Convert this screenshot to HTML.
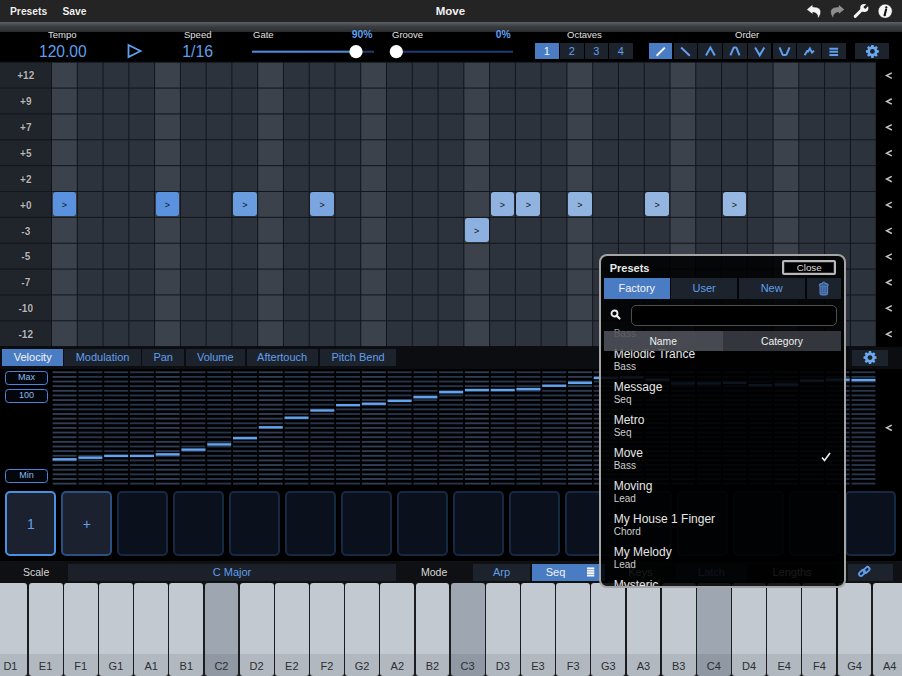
<!DOCTYPE html>
<html><head><meta charset="utf-8"><style>
html,body{margin:0;padding:0;width:902px;height:676px;overflow:hidden;background:#000;font-family:"Liberation Sans", sans-serif}
.t{position:absolute;white-space:nowrap;font-family:"Liberation Sans", sans-serif}
.b{font-weight:bold}
</style></head><body>
<div style="position:absolute;left:0;top:0;width:902px;height:22px;background:#242424"></div>
<div style="position:absolute;left:0;top:22px;width:902px;height:10.5px;background:linear-gradient(#5d6267,#3b3e42 40%,#2c2e31 85%,#1a1b1d)"></div>
<div class="t b" style="left:10px;top:6px;font-size:10.3px;color:#f2f2f2;text-shadow:0 0 1px #000">Presets</div>
<div class="t b" style="left:62.5px;top:6px;font-size:10.3px;color:#f2f2f2;text-shadow:0 0 1px #000">Save</div>
<div class="t b" style="left:-0.6px;width:902px;text-align:center;top:4.7px;font-size:11.5px;color:#f2f2f2">Move</div>
<svg style="position:absolute;left:0;top:0" width="902" height="22">
 <path d="M806.6 9.4 L812.8 4.2 L812.8 6.8 Q822.2 6.8 820.6 14 Q819.8 16.9 817.4 18.3 Q818.4 14.8 815.8 13.2 Q814.5 12.5 812.8 12.4 L812.8 14.6 Z" fill="#f4f4f4" stroke="#111" stroke-width="0.6"/>
 <g transform="translate(1651.3 0) scale(-1 1)"><path d="M806.6 9.4 L812.8 4.2 L812.8 6.8 Q822.2 6.8 820.6 14 Q819.8 16.9 817.4 18.3 Q818.4 14.8 815.8 13.2 Q814.5 12.5 812.8 12.4 L812.8 14.6 Z" fill="#8e8e8e" stroke="#111" stroke-width="0.6"/></g>
 <path d="M855.2 16.4 L861.6 10" stroke="#f4f4f4" stroke-width="3" stroke-linecap="round"/>
 <circle cx="864.3" cy="8" r="4.1" fill="#f4f4f4"/>
 <path d="M864.3 8 L868.5 3.8" stroke="#242424" stroke-width="2.6" stroke-linecap="butt"/>
 <circle cx="865.2" cy="7.1" r="1.2" fill="#242424"/>
 <circle cx="885.2" cy="11.2" r="7.1" fill="#f6f6f6" stroke="#111" stroke-width="0.6"/>
 <circle cx="886.3" cy="7.4" r="1.15" fill="#111"/>
 <path d="M886.1 9.6 L884.6 15.2" stroke="#111" stroke-width="2.1" stroke-linecap="round"/>
 <path d="M883.8 15.4 H885.6" stroke="#111" stroke-width="1"/>
</svg>
<div style="position:absolute;left:0;top:32px;width:902px;height:30px;background:#000"></div>
<div class="t" style="left:48px;top:29px;font-size:9.5px;color:#e0e0e0">Tempo</div>
<div class="t" style="left:39px;top:42.8px;font-size:15.6px;color:#5f9fec">120.00</div>
<svg style="position:absolute;left:125px;top:42px" width="20" height="18"><path d="M3.5 3 L15.5 9 L3.5 15 Z" fill="none" stroke="#5f9fec" stroke-width="1.8" stroke-linejoin="miter"/></svg>
<div class="t" style="left:184px;top:29px;font-size:9.5px;color:#e0e0e0">Speed</div>
<div class="t" style="left:182.3px;top:42.8px;font-size:15.8px;color:#5f9fec">1/16</div>
<div class="t" style="left:253px;top:29px;font-size:9.5px;color:#e0e0e0">Gate</div>
<div class="t b" style="left:351.8px;top:29px;font-size:10.3px;color:#5f9fec">90%</div>
<div class="t" style="left:392px;top:29px;font-size:9.5px;color:#e0e0e0">Groove</div>
<div class="t b" style="left:495.8px;top:29px;font-size:10.3px;color:#5f9fec">0%</div>
<svg style="position:absolute;left:0;top:40px" width="902" height="22">
 <rect x="252" y="10.7" width="104" height="2" fill="#4d8ee0"/>
 <rect x="356" y="10.7" width="18" height="2" fill="#1f3c6e"/>
 <circle cx="356" cy="11.7" r="6.6" fill="#fff"/>
 <rect x="396" y="10.7" width="117" height="2" fill="#1f3c78"/>
 <circle cx="396.3" cy="11.7" r="6.6" fill="#fff"/>
</svg>
<div class="t" style="left:567px;top:29px;font-size:9.5px;color:#e0e0e0">Octaves</div>
<div class="t" style="left:735px;top:29px;font-size:9.5px;color:#e0e0e0">Order</div>
<div class="t" style="left:535px;top:43.3px;width:23.8px;height:16.2px;line-height:16.2px;text-align:center;font-size:11px;background:#4a7cc4;color:#f4f4f4">1</div><div class="t" style="left:560px;top:43.3px;width:23.8px;height:16.2px;line-height:16.2px;text-align:center;font-size:11px;background:#1d232d;color:#5f9fec">2</div><div class="t" style="left:584.5px;top:43.3px;width:23.8px;height:16.2px;line-height:16.2px;text-align:center;font-size:11px;background:#1d232d;color:#5f9fec">3</div><div class="t" style="left:609px;top:43.3px;width:23.8px;height:16.2px;line-height:16.2px;text-align:center;font-size:11px;background:#1d232d;color:#5f9fec">4</div><div style="position:absolute;left:648.8px;top:43.3px;width:23.7px;height:16.2px;background:#4a7cc4"></div><div style="position:absolute;left:673.54px;top:43.3px;width:23.7px;height:16.2px;background:#1d232d"></div><div style="position:absolute;left:698.28px;top:43.3px;width:23.7px;height:16.2px;background:#1d232d"></div><div style="position:absolute;left:723.02px;top:43.3px;width:23.7px;height:16.2px;background:#1d232d"></div><div style="position:absolute;left:747.76px;top:43.3px;width:23.7px;height:16.2px;background:#1d232d"></div><div style="position:absolute;left:772.5px;top:43.3px;width:23.7px;height:16.2px;background:#1d232d"></div><div style="position:absolute;left:797.24px;top:43.3px;width:23.7px;height:16.2px;background:#1d232d"></div><div style="position:absolute;left:821.9799999999999px;top:43.3px;width:23.7px;height:16.2px;background:#1d232d"></div><svg style="position:absolute;left:0;top:0" width="902" height="62">
 <g fill="none" stroke="#5f9fec" stroke-width="2" stroke-linecap="butt" stroke-linejoin="miter">
  <path d="M656.6 55.7 L664.8 47.6" stroke="#f4f4f4"/>
  <path d="M681.1 47.6 L689.8 55.7"/>
  <path d="M706 55.4 L710.4 47.5 L714.8 55.4"/>
  <path d="M730.4 55.3 L733.4 48.2 Q733.8 47.4 734.6 47.4 L735.4 47.4 Q736.2 47.4 736.6 48.2 L739.5 55.3"/>
  <path d="M755.1 47.4 L759.7 55.3 L764.3 47.4"/>
  <path d="M779.5 47.4 L782.4 54.2 Q782.8 55 783.6 55 L785.4 55 Q786.2 55 786.6 54.2 L789.6 47.4"/>
  <path d="M804.6 55.2 L807 51.2 L808 51.6 L809.9 48.6 L812 52.6 L814 50.6"/>
  <path d="M829.4 48.7 H838.1 M829.4 51.8 H838.1 M829.4 54.9 H838.1"/>
 </g>
</svg>
<div style="position:absolute;left:854.7px;top:43.2px;width:34.2px;height:16.2px;background:#1d232d"></div><svg style="position:absolute;left:0;top:0" width="902" height="62"><path d="M877.19 49.92 L878.90 50.28 L878.90 52.52 L877.19 52.88 L876.84 53.74 L877.79 55.21 L876.21 56.79 L874.74 55.84 L873.88 56.19 L873.52 57.90 L871.28 57.90 L870.92 56.19 L870.06 55.84 L868.59 56.79 L867.01 55.21 L867.96 53.74 L867.61 52.88 L865.90 52.52 L865.90 50.28 L867.61 49.92 L867.96 49.06 L867.01 47.59 L868.59 46.01 L870.06 46.96 L870.92 46.61 L871.28 44.90 L873.52 44.90 L873.88 46.61 L874.74 46.96 L876.21 46.01 L877.79 47.59 L876.84 49.06Z" fill="#6aa8f0"/><circle cx="872.4" cy="51.4" r="2.4" fill="#1d232d"/></svg><svg style="position:absolute;left:0;top:0" width="902" height="360"><rect x="0" y="61.7" width="876" height="284.76" fill="#121519"/><rect x="0" y="62.70" width="51" height="24.86" fill="#20242b"/><rect x="52.00" y="62.70" width="24.77" height="24.86" fill="#3b424c"/><rect x="77.77" y="62.70" width="24.77" height="24.86" fill="#2d333d"/><rect x="103.54" y="62.70" width="24.77" height="24.86" fill="#2d333d"/><rect x="129.31" y="62.70" width="24.77" height="24.86" fill="#2d333d"/><rect x="155.08" y="62.70" width="24.77" height="24.86" fill="#3b424c"/><rect x="180.85" y="62.70" width="24.77" height="24.86" fill="#2d333d"/><rect x="206.62" y="62.70" width="24.77" height="24.86" fill="#2d333d"/><rect x="232.39" y="62.70" width="24.77" height="24.86" fill="#2d333d"/><rect x="258.16" y="62.70" width="24.77" height="24.86" fill="#3b424c"/><rect x="283.93" y="62.70" width="24.77" height="24.86" fill="#2d333d"/><rect x="309.70" y="62.70" width="24.77" height="24.86" fill="#2d333d"/><rect x="335.47" y="62.70" width="24.77" height="24.86" fill="#2d333d"/><rect x="361.24" y="62.70" width="24.77" height="24.86" fill="#3b424c"/><rect x="387.01" y="62.70" width="24.77" height="24.86" fill="#2d333d"/><rect x="412.78" y="62.70" width="24.77" height="24.86" fill="#2d333d"/><rect x="438.55" y="62.70" width="24.77" height="24.86" fill="#2d333d"/><rect x="464.32" y="62.70" width="24.77" height="24.86" fill="#3b424c"/><rect x="490.09" y="62.70" width="24.77" height="24.86" fill="#2d333d"/><rect x="515.86" y="62.70" width="24.77" height="24.86" fill="#2d333d"/><rect x="541.63" y="62.70" width="24.77" height="24.86" fill="#2d333d"/><rect x="567.40" y="62.70" width="24.77" height="24.86" fill="#3b424c"/><rect x="593.17" y="62.70" width="24.77" height="24.86" fill="#2d333d"/><rect x="618.94" y="62.70" width="24.77" height="24.86" fill="#2d333d"/><rect x="644.71" y="62.70" width="24.77" height="24.86" fill="#2d333d"/><rect x="670.48" y="62.70" width="24.77" height="24.86" fill="#3b424c"/><rect x="696.25" y="62.70" width="24.77" height="24.86" fill="#2d333d"/><rect x="722.02" y="62.70" width="24.77" height="24.86" fill="#2d333d"/><rect x="747.79" y="62.70" width="24.77" height="24.86" fill="#2d333d"/><rect x="773.56" y="62.70" width="24.77" height="24.86" fill="#3b424c"/><rect x="799.33" y="62.70" width="24.77" height="24.86" fill="#2d333d"/><rect x="825.10" y="62.70" width="24.77" height="24.86" fill="#2d333d"/><rect x="850.87" y="62.70" width="24.77" height="24.86" fill="#2d333d"/><rect x="0" y="88.56" width="51" height="24.86" fill="#20242b"/><rect x="52.00" y="88.56" width="24.77" height="24.86" fill="#3b424c"/><rect x="77.77" y="88.56" width="24.77" height="24.86" fill="#2d333d"/><rect x="103.54" y="88.56" width="24.77" height="24.86" fill="#2d333d"/><rect x="129.31" y="88.56" width="24.77" height="24.86" fill="#2d333d"/><rect x="155.08" y="88.56" width="24.77" height="24.86" fill="#3b424c"/><rect x="180.85" y="88.56" width="24.77" height="24.86" fill="#2d333d"/><rect x="206.62" y="88.56" width="24.77" height="24.86" fill="#2d333d"/><rect x="232.39" y="88.56" width="24.77" height="24.86" fill="#2d333d"/><rect x="258.16" y="88.56" width="24.77" height="24.86" fill="#3b424c"/><rect x="283.93" y="88.56" width="24.77" height="24.86" fill="#2d333d"/><rect x="309.70" y="88.56" width="24.77" height="24.86" fill="#2d333d"/><rect x="335.47" y="88.56" width="24.77" height="24.86" fill="#2d333d"/><rect x="361.24" y="88.56" width="24.77" height="24.86" fill="#3b424c"/><rect x="387.01" y="88.56" width="24.77" height="24.86" fill="#2d333d"/><rect x="412.78" y="88.56" width="24.77" height="24.86" fill="#2d333d"/><rect x="438.55" y="88.56" width="24.77" height="24.86" fill="#2d333d"/><rect x="464.32" y="88.56" width="24.77" height="24.86" fill="#3b424c"/><rect x="490.09" y="88.56" width="24.77" height="24.86" fill="#2d333d"/><rect x="515.86" y="88.56" width="24.77" height="24.86" fill="#2d333d"/><rect x="541.63" y="88.56" width="24.77" height="24.86" fill="#2d333d"/><rect x="567.40" y="88.56" width="24.77" height="24.86" fill="#3b424c"/><rect x="593.17" y="88.56" width="24.77" height="24.86" fill="#2d333d"/><rect x="618.94" y="88.56" width="24.77" height="24.86" fill="#2d333d"/><rect x="644.71" y="88.56" width="24.77" height="24.86" fill="#2d333d"/><rect x="670.48" y="88.56" width="24.77" height="24.86" fill="#3b424c"/><rect x="696.25" y="88.56" width="24.77" height="24.86" fill="#2d333d"/><rect x="722.02" y="88.56" width="24.77" height="24.86" fill="#2d333d"/><rect x="747.79" y="88.56" width="24.77" height="24.86" fill="#2d333d"/><rect x="773.56" y="88.56" width="24.77" height="24.86" fill="#3b424c"/><rect x="799.33" y="88.56" width="24.77" height="24.86" fill="#2d333d"/><rect x="825.10" y="88.56" width="24.77" height="24.86" fill="#2d333d"/><rect x="850.87" y="88.56" width="24.77" height="24.86" fill="#2d333d"/><rect x="0" y="114.42" width="51" height="24.86" fill="#20242b"/><rect x="52.00" y="114.42" width="24.77" height="24.86" fill="#3b424c"/><rect x="77.77" y="114.42" width="24.77" height="24.86" fill="#2d333d"/><rect x="103.54" y="114.42" width="24.77" height="24.86" fill="#2d333d"/><rect x="129.31" y="114.42" width="24.77" height="24.86" fill="#2d333d"/><rect x="155.08" y="114.42" width="24.77" height="24.86" fill="#3b424c"/><rect x="180.85" y="114.42" width="24.77" height="24.86" fill="#2d333d"/><rect x="206.62" y="114.42" width="24.77" height="24.86" fill="#2d333d"/><rect x="232.39" y="114.42" width="24.77" height="24.86" fill="#2d333d"/><rect x="258.16" y="114.42" width="24.77" height="24.86" fill="#3b424c"/><rect x="283.93" y="114.42" width="24.77" height="24.86" fill="#2d333d"/><rect x="309.70" y="114.42" width="24.77" height="24.86" fill="#2d333d"/><rect x="335.47" y="114.42" width="24.77" height="24.86" fill="#2d333d"/><rect x="361.24" y="114.42" width="24.77" height="24.86" fill="#3b424c"/><rect x="387.01" y="114.42" width="24.77" height="24.86" fill="#2d333d"/><rect x="412.78" y="114.42" width="24.77" height="24.86" fill="#2d333d"/><rect x="438.55" y="114.42" width="24.77" height="24.86" fill="#2d333d"/><rect x="464.32" y="114.42" width="24.77" height="24.86" fill="#3b424c"/><rect x="490.09" y="114.42" width="24.77" height="24.86" fill="#2d333d"/><rect x="515.86" y="114.42" width="24.77" height="24.86" fill="#2d333d"/><rect x="541.63" y="114.42" width="24.77" height="24.86" fill="#2d333d"/><rect x="567.40" y="114.42" width="24.77" height="24.86" fill="#3b424c"/><rect x="593.17" y="114.42" width="24.77" height="24.86" fill="#2d333d"/><rect x="618.94" y="114.42" width="24.77" height="24.86" fill="#2d333d"/><rect x="644.71" y="114.42" width="24.77" height="24.86" fill="#2d333d"/><rect x="670.48" y="114.42" width="24.77" height="24.86" fill="#3b424c"/><rect x="696.25" y="114.42" width="24.77" height="24.86" fill="#2d333d"/><rect x="722.02" y="114.42" width="24.77" height="24.86" fill="#2d333d"/><rect x="747.79" y="114.42" width="24.77" height="24.86" fill="#2d333d"/><rect x="773.56" y="114.42" width="24.77" height="24.86" fill="#3b424c"/><rect x="799.33" y="114.42" width="24.77" height="24.86" fill="#2d333d"/><rect x="825.10" y="114.42" width="24.77" height="24.86" fill="#2d333d"/><rect x="850.87" y="114.42" width="24.77" height="24.86" fill="#2d333d"/><rect x="0" y="140.28" width="51" height="24.86" fill="#20242b"/><rect x="52.00" y="140.28" width="24.77" height="24.86" fill="#3b424c"/><rect x="77.77" y="140.28" width="24.77" height="24.86" fill="#2d333d"/><rect x="103.54" y="140.28" width="24.77" height="24.86" fill="#2d333d"/><rect x="129.31" y="140.28" width="24.77" height="24.86" fill="#2d333d"/><rect x="155.08" y="140.28" width="24.77" height="24.86" fill="#3b424c"/><rect x="180.85" y="140.28" width="24.77" height="24.86" fill="#2d333d"/><rect x="206.62" y="140.28" width="24.77" height="24.86" fill="#2d333d"/><rect x="232.39" y="140.28" width="24.77" height="24.86" fill="#2d333d"/><rect x="258.16" y="140.28" width="24.77" height="24.86" fill="#3b424c"/><rect x="283.93" y="140.28" width="24.77" height="24.86" fill="#2d333d"/><rect x="309.70" y="140.28" width="24.77" height="24.86" fill="#2d333d"/><rect x="335.47" y="140.28" width="24.77" height="24.86" fill="#2d333d"/><rect x="361.24" y="140.28" width="24.77" height="24.86" fill="#3b424c"/><rect x="387.01" y="140.28" width="24.77" height="24.86" fill="#2d333d"/><rect x="412.78" y="140.28" width="24.77" height="24.86" fill="#2d333d"/><rect x="438.55" y="140.28" width="24.77" height="24.86" fill="#2d333d"/><rect x="464.32" y="140.28" width="24.77" height="24.86" fill="#3b424c"/><rect x="490.09" y="140.28" width="24.77" height="24.86" fill="#2d333d"/><rect x="515.86" y="140.28" width="24.77" height="24.86" fill="#2d333d"/><rect x="541.63" y="140.28" width="24.77" height="24.86" fill="#2d333d"/><rect x="567.40" y="140.28" width="24.77" height="24.86" fill="#3b424c"/><rect x="593.17" y="140.28" width="24.77" height="24.86" fill="#2d333d"/><rect x="618.94" y="140.28" width="24.77" height="24.86" fill="#2d333d"/><rect x="644.71" y="140.28" width="24.77" height="24.86" fill="#2d333d"/><rect x="670.48" y="140.28" width="24.77" height="24.86" fill="#3b424c"/><rect x="696.25" y="140.28" width="24.77" height="24.86" fill="#2d333d"/><rect x="722.02" y="140.28" width="24.77" height="24.86" fill="#2d333d"/><rect x="747.79" y="140.28" width="24.77" height="24.86" fill="#2d333d"/><rect x="773.56" y="140.28" width="24.77" height="24.86" fill="#3b424c"/><rect x="799.33" y="140.28" width="24.77" height="24.86" fill="#2d333d"/><rect x="825.10" y="140.28" width="24.77" height="24.86" fill="#2d333d"/><rect x="850.87" y="140.28" width="24.77" height="24.86" fill="#2d333d"/><rect x="0" y="166.14" width="51" height="24.86" fill="#20242b"/><rect x="52.00" y="166.14" width="24.77" height="24.86" fill="#3b424c"/><rect x="77.77" y="166.14" width="24.77" height="24.86" fill="#2d333d"/><rect x="103.54" y="166.14" width="24.77" height="24.86" fill="#2d333d"/><rect x="129.31" y="166.14" width="24.77" height="24.86" fill="#2d333d"/><rect x="155.08" y="166.14" width="24.77" height="24.86" fill="#3b424c"/><rect x="180.85" y="166.14" width="24.77" height="24.86" fill="#2d333d"/><rect x="206.62" y="166.14" width="24.77" height="24.86" fill="#2d333d"/><rect x="232.39" y="166.14" width="24.77" height="24.86" fill="#2d333d"/><rect x="258.16" y="166.14" width="24.77" height="24.86" fill="#3b424c"/><rect x="283.93" y="166.14" width="24.77" height="24.86" fill="#2d333d"/><rect x="309.70" y="166.14" width="24.77" height="24.86" fill="#2d333d"/><rect x="335.47" y="166.14" width="24.77" height="24.86" fill="#2d333d"/><rect x="361.24" y="166.14" width="24.77" height="24.86" fill="#3b424c"/><rect x="387.01" y="166.14" width="24.77" height="24.86" fill="#2d333d"/><rect x="412.78" y="166.14" width="24.77" height="24.86" fill="#2d333d"/><rect x="438.55" y="166.14" width="24.77" height="24.86" fill="#2d333d"/><rect x="464.32" y="166.14" width="24.77" height="24.86" fill="#3b424c"/><rect x="490.09" y="166.14" width="24.77" height="24.86" fill="#2d333d"/><rect x="515.86" y="166.14" width="24.77" height="24.86" fill="#2d333d"/><rect x="541.63" y="166.14" width="24.77" height="24.86" fill="#2d333d"/><rect x="567.40" y="166.14" width="24.77" height="24.86" fill="#3b424c"/><rect x="593.17" y="166.14" width="24.77" height="24.86" fill="#2d333d"/><rect x="618.94" y="166.14" width="24.77" height="24.86" fill="#2d333d"/><rect x="644.71" y="166.14" width="24.77" height="24.86" fill="#2d333d"/><rect x="670.48" y="166.14" width="24.77" height="24.86" fill="#3b424c"/><rect x="696.25" y="166.14" width="24.77" height="24.86" fill="#2d333d"/><rect x="722.02" y="166.14" width="24.77" height="24.86" fill="#2d333d"/><rect x="747.79" y="166.14" width="24.77" height="24.86" fill="#2d333d"/><rect x="773.56" y="166.14" width="24.77" height="24.86" fill="#3b424c"/><rect x="799.33" y="166.14" width="24.77" height="24.86" fill="#2d333d"/><rect x="825.10" y="166.14" width="24.77" height="24.86" fill="#2d333d"/><rect x="850.87" y="166.14" width="24.77" height="24.86" fill="#2d333d"/><rect x="0" y="192.00" width="51" height="24.86" fill="#20242b"/><rect x="52.00" y="192.00" width="24.77" height="24.86" fill="#3b424c"/><rect x="77.77" y="192.00" width="24.77" height="24.86" fill="#2d333d"/><rect x="103.54" y="192.00" width="24.77" height="24.86" fill="#2d333d"/><rect x="129.31" y="192.00" width="24.77" height="24.86" fill="#2d333d"/><rect x="155.08" y="192.00" width="24.77" height="24.86" fill="#3b424c"/><rect x="180.85" y="192.00" width="24.77" height="24.86" fill="#2d333d"/><rect x="206.62" y="192.00" width="24.77" height="24.86" fill="#2d333d"/><rect x="232.39" y="192.00" width="24.77" height="24.86" fill="#2d333d"/><rect x="258.16" y="192.00" width="24.77" height="24.86" fill="#3b424c"/><rect x="283.93" y="192.00" width="24.77" height="24.86" fill="#2d333d"/><rect x="309.70" y="192.00" width="24.77" height="24.86" fill="#2d333d"/><rect x="335.47" y="192.00" width="24.77" height="24.86" fill="#2d333d"/><rect x="361.24" y="192.00" width="24.77" height="24.86" fill="#3b424c"/><rect x="387.01" y="192.00" width="24.77" height="24.86" fill="#2d333d"/><rect x="412.78" y="192.00" width="24.77" height="24.86" fill="#2d333d"/><rect x="438.55" y="192.00" width="24.77" height="24.86" fill="#2d333d"/><rect x="464.32" y="192.00" width="24.77" height="24.86" fill="#3b424c"/><rect x="490.09" y="192.00" width="24.77" height="24.86" fill="#2d333d"/><rect x="515.86" y="192.00" width="24.77" height="24.86" fill="#2d333d"/><rect x="541.63" y="192.00" width="24.77" height="24.86" fill="#2d333d"/><rect x="567.40" y="192.00" width="24.77" height="24.86" fill="#3b424c"/><rect x="593.17" y="192.00" width="24.77" height="24.86" fill="#2d333d"/><rect x="618.94" y="192.00" width="24.77" height="24.86" fill="#2d333d"/><rect x="644.71" y="192.00" width="24.77" height="24.86" fill="#2d333d"/><rect x="670.48" y="192.00" width="24.77" height="24.86" fill="#3b424c"/><rect x="696.25" y="192.00" width="24.77" height="24.86" fill="#2d333d"/><rect x="722.02" y="192.00" width="24.77" height="24.86" fill="#2d333d"/><rect x="747.79" y="192.00" width="24.77" height="24.86" fill="#2d333d"/><rect x="773.56" y="192.00" width="24.77" height="24.86" fill="#3b424c"/><rect x="799.33" y="192.00" width="24.77" height="24.86" fill="#2d333d"/><rect x="825.10" y="192.00" width="24.77" height="24.86" fill="#2d333d"/><rect x="850.87" y="192.00" width="24.77" height="24.86" fill="#2d333d"/><rect x="0" y="217.86" width="51" height="24.86" fill="#20242b"/><rect x="52.00" y="217.86" width="24.77" height="24.86" fill="#3b424c"/><rect x="77.77" y="217.86" width="24.77" height="24.86" fill="#2d333d"/><rect x="103.54" y="217.86" width="24.77" height="24.86" fill="#2d333d"/><rect x="129.31" y="217.86" width="24.77" height="24.86" fill="#2d333d"/><rect x="155.08" y="217.86" width="24.77" height="24.86" fill="#3b424c"/><rect x="180.85" y="217.86" width="24.77" height="24.86" fill="#2d333d"/><rect x="206.62" y="217.86" width="24.77" height="24.86" fill="#2d333d"/><rect x="232.39" y="217.86" width="24.77" height="24.86" fill="#2d333d"/><rect x="258.16" y="217.86" width="24.77" height="24.86" fill="#3b424c"/><rect x="283.93" y="217.86" width="24.77" height="24.86" fill="#2d333d"/><rect x="309.70" y="217.86" width="24.77" height="24.86" fill="#2d333d"/><rect x="335.47" y="217.86" width="24.77" height="24.86" fill="#2d333d"/><rect x="361.24" y="217.86" width="24.77" height="24.86" fill="#3b424c"/><rect x="387.01" y="217.86" width="24.77" height="24.86" fill="#2d333d"/><rect x="412.78" y="217.86" width="24.77" height="24.86" fill="#2d333d"/><rect x="438.55" y="217.86" width="24.77" height="24.86" fill="#2d333d"/><rect x="464.32" y="217.86" width="24.77" height="24.86" fill="#3b424c"/><rect x="490.09" y="217.86" width="24.77" height="24.86" fill="#2d333d"/><rect x="515.86" y="217.86" width="24.77" height="24.86" fill="#2d333d"/><rect x="541.63" y="217.86" width="24.77" height="24.86" fill="#2d333d"/><rect x="567.40" y="217.86" width="24.77" height="24.86" fill="#3b424c"/><rect x="593.17" y="217.86" width="24.77" height="24.86" fill="#2d333d"/><rect x="618.94" y="217.86" width="24.77" height="24.86" fill="#2d333d"/><rect x="644.71" y="217.86" width="24.77" height="24.86" fill="#2d333d"/><rect x="670.48" y="217.86" width="24.77" height="24.86" fill="#3b424c"/><rect x="696.25" y="217.86" width="24.77" height="24.86" fill="#2d333d"/><rect x="722.02" y="217.86" width="24.77" height="24.86" fill="#2d333d"/><rect x="747.79" y="217.86" width="24.77" height="24.86" fill="#2d333d"/><rect x="773.56" y="217.86" width="24.77" height="24.86" fill="#3b424c"/><rect x="799.33" y="217.86" width="24.77" height="24.86" fill="#2d333d"/><rect x="825.10" y="217.86" width="24.77" height="24.86" fill="#2d333d"/><rect x="850.87" y="217.86" width="24.77" height="24.86" fill="#2d333d"/><rect x="0" y="243.72" width="51" height="24.86" fill="#20242b"/><rect x="52.00" y="243.72" width="24.77" height="24.86" fill="#3b424c"/><rect x="77.77" y="243.72" width="24.77" height="24.86" fill="#2d333d"/><rect x="103.54" y="243.72" width="24.77" height="24.86" fill="#2d333d"/><rect x="129.31" y="243.72" width="24.77" height="24.86" fill="#2d333d"/><rect x="155.08" y="243.72" width="24.77" height="24.86" fill="#3b424c"/><rect x="180.85" y="243.72" width="24.77" height="24.86" fill="#2d333d"/><rect x="206.62" y="243.72" width="24.77" height="24.86" fill="#2d333d"/><rect x="232.39" y="243.72" width="24.77" height="24.86" fill="#2d333d"/><rect x="258.16" y="243.72" width="24.77" height="24.86" fill="#3b424c"/><rect x="283.93" y="243.72" width="24.77" height="24.86" fill="#2d333d"/><rect x="309.70" y="243.72" width="24.77" height="24.86" fill="#2d333d"/><rect x="335.47" y="243.72" width="24.77" height="24.86" fill="#2d333d"/><rect x="361.24" y="243.72" width="24.77" height="24.86" fill="#3b424c"/><rect x="387.01" y="243.72" width="24.77" height="24.86" fill="#2d333d"/><rect x="412.78" y="243.72" width="24.77" height="24.86" fill="#2d333d"/><rect x="438.55" y="243.72" width="24.77" height="24.86" fill="#2d333d"/><rect x="464.32" y="243.72" width="24.77" height="24.86" fill="#3b424c"/><rect x="490.09" y="243.72" width="24.77" height="24.86" fill="#2d333d"/><rect x="515.86" y="243.72" width="24.77" height="24.86" fill="#2d333d"/><rect x="541.63" y="243.72" width="24.77" height="24.86" fill="#2d333d"/><rect x="567.40" y="243.72" width="24.77" height="24.86" fill="#3b424c"/><rect x="593.17" y="243.72" width="24.77" height="24.86" fill="#2d333d"/><rect x="618.94" y="243.72" width="24.77" height="24.86" fill="#2d333d"/><rect x="644.71" y="243.72" width="24.77" height="24.86" fill="#2d333d"/><rect x="670.48" y="243.72" width="24.77" height="24.86" fill="#3b424c"/><rect x="696.25" y="243.72" width="24.77" height="24.86" fill="#2d333d"/><rect x="722.02" y="243.72" width="24.77" height="24.86" fill="#2d333d"/><rect x="747.79" y="243.72" width="24.77" height="24.86" fill="#2d333d"/><rect x="773.56" y="243.72" width="24.77" height="24.86" fill="#3b424c"/><rect x="799.33" y="243.72" width="24.77" height="24.86" fill="#2d333d"/><rect x="825.10" y="243.72" width="24.77" height="24.86" fill="#2d333d"/><rect x="850.87" y="243.72" width="24.77" height="24.86" fill="#2d333d"/><rect x="0" y="269.58" width="51" height="24.86" fill="#20242b"/><rect x="52.00" y="269.58" width="24.77" height="24.86" fill="#3b424c"/><rect x="77.77" y="269.58" width="24.77" height="24.86" fill="#2d333d"/><rect x="103.54" y="269.58" width="24.77" height="24.86" fill="#2d333d"/><rect x="129.31" y="269.58" width="24.77" height="24.86" fill="#2d333d"/><rect x="155.08" y="269.58" width="24.77" height="24.86" fill="#3b424c"/><rect x="180.85" y="269.58" width="24.77" height="24.86" fill="#2d333d"/><rect x="206.62" y="269.58" width="24.77" height="24.86" fill="#2d333d"/><rect x="232.39" y="269.58" width="24.77" height="24.86" fill="#2d333d"/><rect x="258.16" y="269.58" width="24.77" height="24.86" fill="#3b424c"/><rect x="283.93" y="269.58" width="24.77" height="24.86" fill="#2d333d"/><rect x="309.70" y="269.58" width="24.77" height="24.86" fill="#2d333d"/><rect x="335.47" y="269.58" width="24.77" height="24.86" fill="#2d333d"/><rect x="361.24" y="269.58" width="24.77" height="24.86" fill="#3b424c"/><rect x="387.01" y="269.58" width="24.77" height="24.86" fill="#2d333d"/><rect x="412.78" y="269.58" width="24.77" height="24.86" fill="#2d333d"/><rect x="438.55" y="269.58" width="24.77" height="24.86" fill="#2d333d"/><rect x="464.32" y="269.58" width="24.77" height="24.86" fill="#3b424c"/><rect x="490.09" y="269.58" width="24.77" height="24.86" fill="#2d333d"/><rect x="515.86" y="269.58" width="24.77" height="24.86" fill="#2d333d"/><rect x="541.63" y="269.58" width="24.77" height="24.86" fill="#2d333d"/><rect x="567.40" y="269.58" width="24.77" height="24.86" fill="#3b424c"/><rect x="593.17" y="269.58" width="24.77" height="24.86" fill="#2d333d"/><rect x="618.94" y="269.58" width="24.77" height="24.86" fill="#2d333d"/><rect x="644.71" y="269.58" width="24.77" height="24.86" fill="#2d333d"/><rect x="670.48" y="269.58" width="24.77" height="24.86" fill="#3b424c"/><rect x="696.25" y="269.58" width="24.77" height="24.86" fill="#2d333d"/><rect x="722.02" y="269.58" width="24.77" height="24.86" fill="#2d333d"/><rect x="747.79" y="269.58" width="24.77" height="24.86" fill="#2d333d"/><rect x="773.56" y="269.58" width="24.77" height="24.86" fill="#3b424c"/><rect x="799.33" y="269.58" width="24.77" height="24.86" fill="#2d333d"/><rect x="825.10" y="269.58" width="24.77" height="24.86" fill="#2d333d"/><rect x="850.87" y="269.58" width="24.77" height="24.86" fill="#2d333d"/><rect x="0" y="295.44" width="51" height="24.86" fill="#20242b"/><rect x="52.00" y="295.44" width="24.77" height="24.86" fill="#3b424c"/><rect x="77.77" y="295.44" width="24.77" height="24.86" fill="#2d333d"/><rect x="103.54" y="295.44" width="24.77" height="24.86" fill="#2d333d"/><rect x="129.31" y="295.44" width="24.77" height="24.86" fill="#2d333d"/><rect x="155.08" y="295.44" width="24.77" height="24.86" fill="#3b424c"/><rect x="180.85" y="295.44" width="24.77" height="24.86" fill="#2d333d"/><rect x="206.62" y="295.44" width="24.77" height="24.86" fill="#2d333d"/><rect x="232.39" y="295.44" width="24.77" height="24.86" fill="#2d333d"/><rect x="258.16" y="295.44" width="24.77" height="24.86" fill="#3b424c"/><rect x="283.93" y="295.44" width="24.77" height="24.86" fill="#2d333d"/><rect x="309.70" y="295.44" width="24.77" height="24.86" fill="#2d333d"/><rect x="335.47" y="295.44" width="24.77" height="24.86" fill="#2d333d"/><rect x="361.24" y="295.44" width="24.77" height="24.86" fill="#3b424c"/><rect x="387.01" y="295.44" width="24.77" height="24.86" fill="#2d333d"/><rect x="412.78" y="295.44" width="24.77" height="24.86" fill="#2d333d"/><rect x="438.55" y="295.44" width="24.77" height="24.86" fill="#2d333d"/><rect x="464.32" y="295.44" width="24.77" height="24.86" fill="#3b424c"/><rect x="490.09" y="295.44" width="24.77" height="24.86" fill="#2d333d"/><rect x="515.86" y="295.44" width="24.77" height="24.86" fill="#2d333d"/><rect x="541.63" y="295.44" width="24.77" height="24.86" fill="#2d333d"/><rect x="567.40" y="295.44" width="24.77" height="24.86" fill="#3b424c"/><rect x="593.17" y="295.44" width="24.77" height="24.86" fill="#2d333d"/><rect x="618.94" y="295.44" width="24.77" height="24.86" fill="#2d333d"/><rect x="644.71" y="295.44" width="24.77" height="24.86" fill="#2d333d"/><rect x="670.48" y="295.44" width="24.77" height="24.86" fill="#3b424c"/><rect x="696.25" y="295.44" width="24.77" height="24.86" fill="#2d333d"/><rect x="722.02" y="295.44" width="24.77" height="24.86" fill="#2d333d"/><rect x="747.79" y="295.44" width="24.77" height="24.86" fill="#2d333d"/><rect x="773.56" y="295.44" width="24.77" height="24.86" fill="#3b424c"/><rect x="799.33" y="295.44" width="24.77" height="24.86" fill="#2d333d"/><rect x="825.10" y="295.44" width="24.77" height="24.86" fill="#2d333d"/><rect x="850.87" y="295.44" width="24.77" height="24.86" fill="#2d333d"/><rect x="0" y="321.30" width="51" height="24.86" fill="#20242b"/><rect x="52.00" y="321.30" width="24.77" height="24.86" fill="#3b424c"/><rect x="77.77" y="321.30" width="24.77" height="24.86" fill="#2d333d"/><rect x="103.54" y="321.30" width="24.77" height="24.86" fill="#2d333d"/><rect x="129.31" y="321.30" width="24.77" height="24.86" fill="#2d333d"/><rect x="155.08" y="321.30" width="24.77" height="24.86" fill="#3b424c"/><rect x="180.85" y="321.30" width="24.77" height="24.86" fill="#2d333d"/><rect x="206.62" y="321.30" width="24.77" height="24.86" fill="#2d333d"/><rect x="232.39" y="321.30" width="24.77" height="24.86" fill="#2d333d"/><rect x="258.16" y="321.30" width="24.77" height="24.86" fill="#3b424c"/><rect x="283.93" y="321.30" width="24.77" height="24.86" fill="#2d333d"/><rect x="309.70" y="321.30" width="24.77" height="24.86" fill="#2d333d"/><rect x="335.47" y="321.30" width="24.77" height="24.86" fill="#2d333d"/><rect x="361.24" y="321.30" width="24.77" height="24.86" fill="#3b424c"/><rect x="387.01" y="321.30" width="24.77" height="24.86" fill="#2d333d"/><rect x="412.78" y="321.30" width="24.77" height="24.86" fill="#2d333d"/><rect x="438.55" y="321.30" width="24.77" height="24.86" fill="#2d333d"/><rect x="464.32" y="321.30" width="24.77" height="24.86" fill="#3b424c"/><rect x="490.09" y="321.30" width="24.77" height="24.86" fill="#2d333d"/><rect x="515.86" y="321.30" width="24.77" height="24.86" fill="#2d333d"/><rect x="541.63" y="321.30" width="24.77" height="24.86" fill="#2d333d"/><rect x="567.40" y="321.30" width="24.77" height="24.86" fill="#3b424c"/><rect x="593.17" y="321.30" width="24.77" height="24.86" fill="#2d333d"/><rect x="618.94" y="321.30" width="24.77" height="24.86" fill="#2d333d"/><rect x="644.71" y="321.30" width="24.77" height="24.86" fill="#2d333d"/><rect x="670.48" y="321.30" width="24.77" height="24.86" fill="#3b424c"/><rect x="696.25" y="321.30" width="24.77" height="24.86" fill="#2d333d"/><rect x="722.02" y="321.30" width="24.77" height="24.86" fill="#2d333d"/><rect x="747.79" y="321.30" width="24.77" height="24.86" fill="#2d333d"/><rect x="773.56" y="321.30" width="24.77" height="24.86" fill="#3b424c"/><rect x="799.33" y="321.30" width="24.77" height="24.86" fill="#2d333d"/><rect x="825.10" y="321.30" width="24.77" height="24.86" fill="#2d333d"/><rect x="850.87" y="321.30" width="24.77" height="24.86" fill="#2d333d"/></svg><div class="t b" style="left:0;width:51.5px;text-align:center;top:70.3px;font-size:10px;color:#b8b8b8;text-shadow:0 0 1px #000">+12</div><div class="t b" style="left:0;width:51.5px;text-align:center;top:96.2px;font-size:10px;color:#b8b8b8;text-shadow:0 0 1px #000">+9</div><div class="t b" style="left:0;width:51.5px;text-align:center;top:122.0px;font-size:10px;color:#b8b8b8;text-shadow:0 0 1px #000">+7</div><div class="t b" style="left:0;width:51.5px;text-align:center;top:147.9px;font-size:10px;color:#b8b8b8;text-shadow:0 0 1px #000">+5</div><div class="t b" style="left:0;width:51.5px;text-align:center;top:173.7px;font-size:10px;color:#b8b8b8;text-shadow:0 0 1px #000">+2</div><div class="t b" style="left:0;width:51.5px;text-align:center;top:199.6px;font-size:10px;color:#b8b8b8;text-shadow:0 0 1px #000">+0</div><div class="t b" style="left:0;width:51.5px;text-align:center;top:225.5px;font-size:10px;color:#b8b8b8;text-shadow:0 0 1px #000">-3</div><div class="t b" style="left:0;width:51.5px;text-align:center;top:251.3px;font-size:10px;color:#b8b8b8;text-shadow:0 0 1px #000">-5</div><div class="t b" style="left:0;width:51.5px;text-align:center;top:277.2px;font-size:10px;color:#b8b8b8;text-shadow:0 0 1px #000">-7</div><div class="t b" style="left:0;width:51.5px;text-align:center;top:303.0px;font-size:10px;color:#b8b8b8;text-shadow:0 0 1px #000">-10</div><div class="t b" style="left:0;width:51.5px;text-align:center;top:328.9px;font-size:10px;color:#b8b8b8;text-shadow:0 0 1px #000">-12</div><svg style="position:absolute;left:0;top:0" width="902" height="500"><g fill="none" stroke="#c4c4c4" stroke-width="1.5" stroke-linejoin="miter"><path d="M891.8 72.90 L886.6 75.60 L891.8 78.30"/><path d="M891.8 98.76 L886.6 101.46 L891.8 104.16"/><path d="M891.8 124.62 L886.6 127.32 L891.8 130.02"/><path d="M891.8 150.48 L886.6 153.18 L891.8 155.88"/><path d="M891.8 176.34 L886.6 179.04 L891.8 181.74"/><path d="M891.8 202.20 L886.6 204.90 L891.8 207.60"/><path d="M891.8 228.06 L886.6 230.76 L891.8 233.46"/><path d="M891.8 253.92 L886.6 256.62 L891.8 259.32"/><path d="M891.8 279.78 L886.6 282.48 L891.8 285.18"/><path d="M891.8 305.64 L886.6 308.34 L891.8 311.04"/><path d="M891.8 331.50 L886.6 334.20 L891.8 336.90"/><path d="M891.8 425.1 L886.6 427.8 L891.8 430.5"/></g></svg><div class="t" style="left:52.50px;top:192.20px;width:23.8px;height:24px;border-radius:3px;background:#5a92e0;color:#111;font-size:9px;line-height:27px;text-align:center">&gt;</div><div class="t" style="left:155.58px;top:192.20px;width:23.8px;height:24px;border-radius:3px;background:#5a92e0;color:#111;font-size:9px;line-height:27px;text-align:center">&gt;</div><div class="t" style="left:232.89px;top:192.20px;width:23.8px;height:24px;border-radius:3px;background:#6a9de0;color:#111;font-size:9px;line-height:27px;text-align:center">&gt;</div><div class="t" style="left:310.20px;top:192.20px;width:23.8px;height:24px;border-radius:3px;background:#7aa5de;color:#111;font-size:9px;line-height:27px;text-align:center">&gt;</div><div class="t" style="left:464.82px;top:218.06px;width:23.8px;height:24px;border-radius:3px;background:#8cb0e0;color:#111;font-size:9px;line-height:27px;text-align:center">&gt;</div><div class="t" style="left:490.59px;top:192.20px;width:23.8px;height:24px;border-radius:3px;background:#8fb2e0;color:#111;font-size:9px;line-height:27px;text-align:center">&gt;</div><div class="t" style="left:516.36px;top:192.20px;width:23.8px;height:24px;border-radius:3px;background:#90b3e0;color:#111;font-size:9px;line-height:27px;text-align:center">&gt;</div><div class="t" style="left:567.90px;top:192.20px;width:23.8px;height:24px;border-radius:3px;background:#92b4e0;color:#111;font-size:9px;line-height:27px;text-align:center">&gt;</div><div class="t" style="left:645.21px;top:192.20px;width:23.8px;height:24px;border-radius:3px;background:#94b5e0;color:#111;font-size:9px;line-height:27px;text-align:center">&gt;</div><div class="t" style="left:722.52px;top:192.20px;width:23.8px;height:24px;border-radius:3px;background:#96b7e2;color:#111;font-size:9px;line-height:27px;text-align:center">&gt;</div><div style="position:absolute;left:0;top:347.2px;width:902px;height:21.8px;background:#0b0d11"></div><div class="t" style="left:2.2px;top:348.7px;width:61.0px;height:17px;line-height:17px;text-align:center;font-size:11px;background:#4a7cc4;color:#f4f4f4">Velocity</div><div class="t" style="left:64.3px;top:348.7px;width:76.5px;height:17px;line-height:17px;text-align:center;font-size:11px;background:#1d232d;color:#5f9fec">Modulation</div><div class="t" style="left:141.9px;top:348.7px;width:42.6px;height:17px;line-height:17px;text-align:center;font-size:11px;background:#1d232d;color:#5f9fec">Pan</div><div class="t" style="left:185.9px;top:348.7px;width:58.8px;height:17px;line-height:17px;text-align:center;font-size:11px;background:#1d232d;color:#5f9fec">Volume</div><div class="t" style="left:246.5px;top:348.7px;width:71.3px;height:17px;line-height:17px;text-align:center;font-size:11px;background:#1d232d;color:#5f9fec">Aftertouch</div><div class="t" style="left:320.2px;top:348.7px;width:75.8px;height:17px;line-height:17px;text-align:center;font-size:11px;background:#1d232d;color:#5f9fec">Pitch Bend</div><div style="position:absolute;left:852.3px;top:349.5px;width:35.5px;height:16px;background:#1d232d"></div><svg style="position:absolute;left:0;top:340px" width="902" height="30"><path d="M874.79 16.12 L876.50 16.48 L876.50 18.72 L874.79 19.08 L874.44 19.94 L875.39 21.41 L873.81 22.99 L872.34 22.04 L871.48 22.39 L871.12 24.10 L868.88 24.10 L868.52 22.39 L867.66 22.04 L866.19 22.99 L864.61 21.41 L865.56 19.94 L865.21 19.08 L863.50 18.72 L863.50 16.48 L865.21 16.12 L865.56 15.26 L864.61 13.79 L866.19 12.21 L867.66 13.16 L868.52 12.81 L868.88 11.10 L871.12 11.10 L871.48 12.81 L872.34 13.16 L873.81 12.21 L875.39 13.79 L874.44 15.26Z" fill="#6aa8f0"/><circle cx="870" cy="17.6" r="2.4" fill="#1d232d"/></svg><svg style="position:absolute;left:0;top:0" width="902" height="500"><rect x="52.60" y="371.30" width="24" height="1.9" fill="#303d54"/><rect x="52.60" y="375.94" width="24" height="1.9" fill="#303d54"/><rect x="52.60" y="380.58" width="24" height="1.9" fill="#303d54"/><rect x="52.60" y="385.22" width="24" height="1.9" fill="#303d54"/><rect x="52.60" y="389.86" width="24" height="1.9" fill="#303d54"/><rect x="52.60" y="394.50" width="24" height="1.9" fill="#303d54"/><rect x="52.60" y="399.14" width="24" height="1.9" fill="#303d54"/><rect x="52.60" y="403.78" width="24" height="1.9" fill="#303d54"/><rect x="52.60" y="408.42" width="24" height="1.9" fill="#303d54"/><rect x="52.60" y="413.06" width="24" height="1.9" fill="#303d54"/><rect x="52.60" y="417.70" width="24" height="1.9" fill="#303d54"/><rect x="52.60" y="422.34" width="24" height="1.9" fill="#303d54"/><rect x="52.60" y="426.98" width="24" height="1.9" fill="#303d54"/><rect x="52.60" y="431.62" width="24" height="1.9" fill="#303d54"/><rect x="52.60" y="436.26" width="24" height="1.9" fill="#303d54"/><rect x="52.60" y="440.90" width="24" height="1.9" fill="#303d54"/><rect x="52.60" y="445.54" width="24" height="1.9" fill="#303d54"/><rect x="52.60" y="450.18" width="24" height="1.9" fill="#303d54"/><rect x="52.60" y="454.82" width="24" height="1.9" fill="#303d54"/><rect x="52.60" y="459.46" width="24" height="1.9" fill="#303d54"/><rect x="52.60" y="464.10" width="24" height="1.9" fill="#303d54"/><rect x="52.60" y="468.74" width="24" height="1.9" fill="#303d54"/><rect x="52.60" y="473.38" width="24" height="1.9" fill="#303d54"/><rect x="52.60" y="478.02" width="24" height="1.9" fill="#303d54"/><rect x="52.60" y="482.66" width="24" height="1.9" fill="#303d54"/><rect x="52.60" y="458.10" width="24" height="2.4" fill="#62a4f0"/><rect x="78.37" y="371.30" width="24" height="1.9" fill="#27344a"/><rect x="78.37" y="375.94" width="24" height="1.9" fill="#27344a"/><rect x="78.37" y="380.58" width="24" height="1.9" fill="#27344a"/><rect x="78.37" y="385.22" width="24" height="1.9" fill="#27344a"/><rect x="78.37" y="389.86" width="24" height="1.9" fill="#27344a"/><rect x="78.37" y="394.50" width="24" height="1.9" fill="#27344a"/><rect x="78.37" y="399.14" width="24" height="1.9" fill="#27344a"/><rect x="78.37" y="403.78" width="24" height="1.9" fill="#27344a"/><rect x="78.37" y="408.42" width="24" height="1.9" fill="#27344a"/><rect x="78.37" y="413.06" width="24" height="1.9" fill="#27344a"/><rect x="78.37" y="417.70" width="24" height="1.9" fill="#27344a"/><rect x="78.37" y="422.34" width="24" height="1.9" fill="#27344a"/><rect x="78.37" y="426.98" width="24" height="1.9" fill="#27344a"/><rect x="78.37" y="431.62" width="24" height="1.9" fill="#27344a"/><rect x="78.37" y="436.26" width="24" height="1.9" fill="#27344a"/><rect x="78.37" y="440.90" width="24" height="1.9" fill="#27344a"/><rect x="78.37" y="445.54" width="24" height="1.9" fill="#27344a"/><rect x="78.37" y="450.18" width="24" height="1.9" fill="#27344a"/><rect x="78.37" y="454.82" width="24" height="1.9" fill="#27344a"/><rect x="78.37" y="459.46" width="24" height="1.9" fill="#27344a"/><rect x="78.37" y="464.10" width="24" height="1.9" fill="#27344a"/><rect x="78.37" y="468.74" width="24" height="1.9" fill="#27344a"/><rect x="78.37" y="473.38" width="24" height="1.9" fill="#27344a"/><rect x="78.37" y="478.02" width="24" height="1.9" fill="#27344a"/><rect x="78.37" y="482.66" width="24" height="1.9" fill="#27344a"/><rect x="78.37" y="456.50" width="24" height="2.4" fill="#62a4f0"/><rect x="104.14" y="371.30" width="24" height="1.9" fill="#27344a"/><rect x="104.14" y="375.94" width="24" height="1.9" fill="#27344a"/><rect x="104.14" y="380.58" width="24" height="1.9" fill="#27344a"/><rect x="104.14" y="385.22" width="24" height="1.9" fill="#27344a"/><rect x="104.14" y="389.86" width="24" height="1.9" fill="#27344a"/><rect x="104.14" y="394.50" width="24" height="1.9" fill="#27344a"/><rect x="104.14" y="399.14" width="24" height="1.9" fill="#27344a"/><rect x="104.14" y="403.78" width="24" height="1.9" fill="#27344a"/><rect x="104.14" y="408.42" width="24" height="1.9" fill="#27344a"/><rect x="104.14" y="413.06" width="24" height="1.9" fill="#27344a"/><rect x="104.14" y="417.70" width="24" height="1.9" fill="#27344a"/><rect x="104.14" y="422.34" width="24" height="1.9" fill="#27344a"/><rect x="104.14" y="426.98" width="24" height="1.9" fill="#27344a"/><rect x="104.14" y="431.62" width="24" height="1.9" fill="#27344a"/><rect x="104.14" y="436.26" width="24" height="1.9" fill="#27344a"/><rect x="104.14" y="440.90" width="24" height="1.9" fill="#27344a"/><rect x="104.14" y="445.54" width="24" height="1.9" fill="#27344a"/><rect x="104.14" y="450.18" width="24" height="1.9" fill="#27344a"/><rect x="104.14" y="454.82" width="24" height="1.9" fill="#27344a"/><rect x="104.14" y="459.46" width="24" height="1.9" fill="#27344a"/><rect x="104.14" y="464.10" width="24" height="1.9" fill="#27344a"/><rect x="104.14" y="468.74" width="24" height="1.9" fill="#27344a"/><rect x="104.14" y="473.38" width="24" height="1.9" fill="#27344a"/><rect x="104.14" y="478.02" width="24" height="1.9" fill="#27344a"/><rect x="104.14" y="482.66" width="24" height="1.9" fill="#27344a"/><rect x="104.14" y="454.70" width="24" height="2.4" fill="#62a4f0"/><rect x="129.91" y="371.30" width="24" height="1.9" fill="#27344a"/><rect x="129.91" y="375.94" width="24" height="1.9" fill="#27344a"/><rect x="129.91" y="380.58" width="24" height="1.9" fill="#27344a"/><rect x="129.91" y="385.22" width="24" height="1.9" fill="#27344a"/><rect x="129.91" y="389.86" width="24" height="1.9" fill="#27344a"/><rect x="129.91" y="394.50" width="24" height="1.9" fill="#27344a"/><rect x="129.91" y="399.14" width="24" height="1.9" fill="#27344a"/><rect x="129.91" y="403.78" width="24" height="1.9" fill="#27344a"/><rect x="129.91" y="408.42" width="24" height="1.9" fill="#27344a"/><rect x="129.91" y="413.06" width="24" height="1.9" fill="#27344a"/><rect x="129.91" y="417.70" width="24" height="1.9" fill="#27344a"/><rect x="129.91" y="422.34" width="24" height="1.9" fill="#27344a"/><rect x="129.91" y="426.98" width="24" height="1.9" fill="#27344a"/><rect x="129.91" y="431.62" width="24" height="1.9" fill="#27344a"/><rect x="129.91" y="436.26" width="24" height="1.9" fill="#27344a"/><rect x="129.91" y="440.90" width="24" height="1.9" fill="#27344a"/><rect x="129.91" y="445.54" width="24" height="1.9" fill="#27344a"/><rect x="129.91" y="450.18" width="24" height="1.9" fill="#27344a"/><rect x="129.91" y="454.82" width="24" height="1.9" fill="#27344a"/><rect x="129.91" y="459.46" width="24" height="1.9" fill="#27344a"/><rect x="129.91" y="464.10" width="24" height="1.9" fill="#27344a"/><rect x="129.91" y="468.74" width="24" height="1.9" fill="#27344a"/><rect x="129.91" y="473.38" width="24" height="1.9" fill="#27344a"/><rect x="129.91" y="478.02" width="24" height="1.9" fill="#27344a"/><rect x="129.91" y="482.66" width="24" height="1.9" fill="#27344a"/><rect x="129.91" y="454.70" width="24" height="2.4" fill="#62a4f0"/><rect x="155.68" y="371.30" width="24" height="1.9" fill="#303d54"/><rect x="155.68" y="375.94" width="24" height="1.9" fill="#303d54"/><rect x="155.68" y="380.58" width="24" height="1.9" fill="#303d54"/><rect x="155.68" y="385.22" width="24" height="1.9" fill="#303d54"/><rect x="155.68" y="389.86" width="24" height="1.9" fill="#303d54"/><rect x="155.68" y="394.50" width="24" height="1.9" fill="#303d54"/><rect x="155.68" y="399.14" width="24" height="1.9" fill="#303d54"/><rect x="155.68" y="403.78" width="24" height="1.9" fill="#303d54"/><rect x="155.68" y="408.42" width="24" height="1.9" fill="#303d54"/><rect x="155.68" y="413.06" width="24" height="1.9" fill="#303d54"/><rect x="155.68" y="417.70" width="24" height="1.9" fill="#303d54"/><rect x="155.68" y="422.34" width="24" height="1.9" fill="#303d54"/><rect x="155.68" y="426.98" width="24" height="1.9" fill="#303d54"/><rect x="155.68" y="431.62" width="24" height="1.9" fill="#303d54"/><rect x="155.68" y="436.26" width="24" height="1.9" fill="#303d54"/><rect x="155.68" y="440.90" width="24" height="1.9" fill="#303d54"/><rect x="155.68" y="445.54" width="24" height="1.9" fill="#303d54"/><rect x="155.68" y="450.18" width="24" height="1.9" fill="#303d54"/><rect x="155.68" y="454.82" width="24" height="1.9" fill="#303d54"/><rect x="155.68" y="459.46" width="24" height="1.9" fill="#303d54"/><rect x="155.68" y="464.10" width="24" height="1.9" fill="#303d54"/><rect x="155.68" y="468.74" width="24" height="1.9" fill="#303d54"/><rect x="155.68" y="473.38" width="24" height="1.9" fill="#303d54"/><rect x="155.68" y="478.02" width="24" height="1.9" fill="#303d54"/><rect x="155.68" y="482.66" width="24" height="1.9" fill="#303d54"/><rect x="155.68" y="453.10" width="24" height="2.4" fill="#62a4f0"/><rect x="181.45" y="371.30" width="24" height="1.9" fill="#27344a"/><rect x="181.45" y="375.94" width="24" height="1.9" fill="#27344a"/><rect x="181.45" y="380.58" width="24" height="1.9" fill="#27344a"/><rect x="181.45" y="385.22" width="24" height="1.9" fill="#27344a"/><rect x="181.45" y="389.86" width="24" height="1.9" fill="#27344a"/><rect x="181.45" y="394.50" width="24" height="1.9" fill="#27344a"/><rect x="181.45" y="399.14" width="24" height="1.9" fill="#27344a"/><rect x="181.45" y="403.78" width="24" height="1.9" fill="#27344a"/><rect x="181.45" y="408.42" width="24" height="1.9" fill="#27344a"/><rect x="181.45" y="413.06" width="24" height="1.9" fill="#27344a"/><rect x="181.45" y="417.70" width="24" height="1.9" fill="#27344a"/><rect x="181.45" y="422.34" width="24" height="1.9" fill="#27344a"/><rect x="181.45" y="426.98" width="24" height="1.9" fill="#27344a"/><rect x="181.45" y="431.62" width="24" height="1.9" fill="#27344a"/><rect x="181.45" y="436.26" width="24" height="1.9" fill="#27344a"/><rect x="181.45" y="440.90" width="24" height="1.9" fill="#27344a"/><rect x="181.45" y="445.54" width="24" height="1.9" fill="#27344a"/><rect x="181.45" y="450.18" width="24" height="1.9" fill="#27344a"/><rect x="181.45" y="454.82" width="24" height="1.9" fill="#27344a"/><rect x="181.45" y="459.46" width="24" height="1.9" fill="#27344a"/><rect x="181.45" y="464.10" width="24" height="1.9" fill="#27344a"/><rect x="181.45" y="468.74" width="24" height="1.9" fill="#27344a"/><rect x="181.45" y="473.38" width="24" height="1.9" fill="#27344a"/><rect x="181.45" y="478.02" width="24" height="1.9" fill="#27344a"/><rect x="181.45" y="482.66" width="24" height="1.9" fill="#27344a"/><rect x="181.45" y="448.40" width="24" height="2.4" fill="#62a4f0"/><rect x="207.22" y="371.30" width="24" height="1.9" fill="#27344a"/><rect x="207.22" y="375.94" width="24" height="1.9" fill="#27344a"/><rect x="207.22" y="380.58" width="24" height="1.9" fill="#27344a"/><rect x="207.22" y="385.22" width="24" height="1.9" fill="#27344a"/><rect x="207.22" y="389.86" width="24" height="1.9" fill="#27344a"/><rect x="207.22" y="394.50" width="24" height="1.9" fill="#27344a"/><rect x="207.22" y="399.14" width="24" height="1.9" fill="#27344a"/><rect x="207.22" y="403.78" width="24" height="1.9" fill="#27344a"/><rect x="207.22" y="408.42" width="24" height="1.9" fill="#27344a"/><rect x="207.22" y="413.06" width="24" height="1.9" fill="#27344a"/><rect x="207.22" y="417.70" width="24" height="1.9" fill="#27344a"/><rect x="207.22" y="422.34" width="24" height="1.9" fill="#27344a"/><rect x="207.22" y="426.98" width="24" height="1.9" fill="#27344a"/><rect x="207.22" y="431.62" width="24" height="1.9" fill="#27344a"/><rect x="207.22" y="436.26" width="24" height="1.9" fill="#27344a"/><rect x="207.22" y="440.90" width="24" height="1.9" fill="#27344a"/><rect x="207.22" y="445.54" width="24" height="1.9" fill="#27344a"/><rect x="207.22" y="450.18" width="24" height="1.9" fill="#27344a"/><rect x="207.22" y="454.82" width="24" height="1.9" fill="#27344a"/><rect x="207.22" y="459.46" width="24" height="1.9" fill="#27344a"/><rect x="207.22" y="464.10" width="24" height="1.9" fill="#27344a"/><rect x="207.22" y="468.74" width="24" height="1.9" fill="#27344a"/><rect x="207.22" y="473.38" width="24" height="1.9" fill="#27344a"/><rect x="207.22" y="478.02" width="24" height="1.9" fill="#27344a"/><rect x="207.22" y="482.66" width="24" height="1.9" fill="#27344a"/><rect x="207.22" y="443.20" width="24" height="2.4" fill="#62a4f0"/><rect x="232.99" y="371.30" width="24" height="1.9" fill="#27344a"/><rect x="232.99" y="375.94" width="24" height="1.9" fill="#27344a"/><rect x="232.99" y="380.58" width="24" height="1.9" fill="#27344a"/><rect x="232.99" y="385.22" width="24" height="1.9" fill="#27344a"/><rect x="232.99" y="389.86" width="24" height="1.9" fill="#27344a"/><rect x="232.99" y="394.50" width="24" height="1.9" fill="#27344a"/><rect x="232.99" y="399.14" width="24" height="1.9" fill="#27344a"/><rect x="232.99" y="403.78" width="24" height="1.9" fill="#27344a"/><rect x="232.99" y="408.42" width="24" height="1.9" fill="#27344a"/><rect x="232.99" y="413.06" width="24" height="1.9" fill="#27344a"/><rect x="232.99" y="417.70" width="24" height="1.9" fill="#27344a"/><rect x="232.99" y="422.34" width="24" height="1.9" fill="#27344a"/><rect x="232.99" y="426.98" width="24" height="1.9" fill="#27344a"/><rect x="232.99" y="431.62" width="24" height="1.9" fill="#27344a"/><rect x="232.99" y="436.26" width="24" height="1.9" fill="#27344a"/><rect x="232.99" y="440.90" width="24" height="1.9" fill="#27344a"/><rect x="232.99" y="445.54" width="24" height="1.9" fill="#27344a"/><rect x="232.99" y="450.18" width="24" height="1.9" fill="#27344a"/><rect x="232.99" y="454.82" width="24" height="1.9" fill="#27344a"/><rect x="232.99" y="459.46" width="24" height="1.9" fill="#27344a"/><rect x="232.99" y="464.10" width="24" height="1.9" fill="#27344a"/><rect x="232.99" y="468.74" width="24" height="1.9" fill="#27344a"/><rect x="232.99" y="473.38" width="24" height="1.9" fill="#27344a"/><rect x="232.99" y="478.02" width="24" height="1.9" fill="#27344a"/><rect x="232.99" y="482.66" width="24" height="1.9" fill="#27344a"/><rect x="232.99" y="437.00" width="24" height="2.4" fill="#62a4f0"/><rect x="258.76" y="371.30" width="24" height="1.9" fill="#303d54"/><rect x="258.76" y="375.94" width="24" height="1.9" fill="#303d54"/><rect x="258.76" y="380.58" width="24" height="1.9" fill="#303d54"/><rect x="258.76" y="385.22" width="24" height="1.9" fill="#303d54"/><rect x="258.76" y="389.86" width="24" height="1.9" fill="#303d54"/><rect x="258.76" y="394.50" width="24" height="1.9" fill="#303d54"/><rect x="258.76" y="399.14" width="24" height="1.9" fill="#303d54"/><rect x="258.76" y="403.78" width="24" height="1.9" fill="#303d54"/><rect x="258.76" y="408.42" width="24" height="1.9" fill="#303d54"/><rect x="258.76" y="413.06" width="24" height="1.9" fill="#303d54"/><rect x="258.76" y="417.70" width="24" height="1.9" fill="#303d54"/><rect x="258.76" y="422.34" width="24" height="1.9" fill="#303d54"/><rect x="258.76" y="426.98" width="24" height="1.9" fill="#303d54"/><rect x="258.76" y="431.62" width="24" height="1.9" fill="#303d54"/><rect x="258.76" y="436.26" width="24" height="1.9" fill="#303d54"/><rect x="258.76" y="440.90" width="24" height="1.9" fill="#303d54"/><rect x="258.76" y="445.54" width="24" height="1.9" fill="#303d54"/><rect x="258.76" y="450.18" width="24" height="1.9" fill="#303d54"/><rect x="258.76" y="454.82" width="24" height="1.9" fill="#303d54"/><rect x="258.76" y="459.46" width="24" height="1.9" fill="#303d54"/><rect x="258.76" y="464.10" width="24" height="1.9" fill="#303d54"/><rect x="258.76" y="468.74" width="24" height="1.9" fill="#303d54"/><rect x="258.76" y="473.38" width="24" height="1.9" fill="#303d54"/><rect x="258.76" y="478.02" width="24" height="1.9" fill="#303d54"/><rect x="258.76" y="482.66" width="24" height="1.9" fill="#303d54"/><rect x="258.76" y="426.10" width="24" height="2.4" fill="#62a4f0"/><rect x="284.53" y="371.30" width="24" height="1.9" fill="#27344a"/><rect x="284.53" y="375.94" width="24" height="1.9" fill="#27344a"/><rect x="284.53" y="380.58" width="24" height="1.9" fill="#27344a"/><rect x="284.53" y="385.22" width="24" height="1.9" fill="#27344a"/><rect x="284.53" y="389.86" width="24" height="1.9" fill="#27344a"/><rect x="284.53" y="394.50" width="24" height="1.9" fill="#27344a"/><rect x="284.53" y="399.14" width="24" height="1.9" fill="#27344a"/><rect x="284.53" y="403.78" width="24" height="1.9" fill="#27344a"/><rect x="284.53" y="408.42" width="24" height="1.9" fill="#27344a"/><rect x="284.53" y="413.06" width="24" height="1.9" fill="#27344a"/><rect x="284.53" y="417.70" width="24" height="1.9" fill="#27344a"/><rect x="284.53" y="422.34" width="24" height="1.9" fill="#27344a"/><rect x="284.53" y="426.98" width="24" height="1.9" fill="#27344a"/><rect x="284.53" y="431.62" width="24" height="1.9" fill="#27344a"/><rect x="284.53" y="436.26" width="24" height="1.9" fill="#27344a"/><rect x="284.53" y="440.90" width="24" height="1.9" fill="#27344a"/><rect x="284.53" y="445.54" width="24" height="1.9" fill="#27344a"/><rect x="284.53" y="450.18" width="24" height="1.9" fill="#27344a"/><rect x="284.53" y="454.82" width="24" height="1.9" fill="#27344a"/><rect x="284.53" y="459.46" width="24" height="1.9" fill="#27344a"/><rect x="284.53" y="464.10" width="24" height="1.9" fill="#27344a"/><rect x="284.53" y="468.74" width="24" height="1.9" fill="#27344a"/><rect x="284.53" y="473.38" width="24" height="1.9" fill="#27344a"/><rect x="284.53" y="478.02" width="24" height="1.9" fill="#27344a"/><rect x="284.53" y="482.66" width="24" height="1.9" fill="#27344a"/><rect x="284.53" y="416.50" width="24" height="2.4" fill="#62a4f0"/><rect x="310.30" y="371.30" width="24" height="1.9" fill="#27344a"/><rect x="310.30" y="375.94" width="24" height="1.9" fill="#27344a"/><rect x="310.30" y="380.58" width="24" height="1.9" fill="#27344a"/><rect x="310.30" y="385.22" width="24" height="1.9" fill="#27344a"/><rect x="310.30" y="389.86" width="24" height="1.9" fill="#27344a"/><rect x="310.30" y="394.50" width="24" height="1.9" fill="#27344a"/><rect x="310.30" y="399.14" width="24" height="1.9" fill="#27344a"/><rect x="310.30" y="403.78" width="24" height="1.9" fill="#27344a"/><rect x="310.30" y="408.42" width="24" height="1.9" fill="#27344a"/><rect x="310.30" y="413.06" width="24" height="1.9" fill="#27344a"/><rect x="310.30" y="417.70" width="24" height="1.9" fill="#27344a"/><rect x="310.30" y="422.34" width="24" height="1.9" fill="#27344a"/><rect x="310.30" y="426.98" width="24" height="1.9" fill="#27344a"/><rect x="310.30" y="431.62" width="24" height="1.9" fill="#27344a"/><rect x="310.30" y="436.26" width="24" height="1.9" fill="#27344a"/><rect x="310.30" y="440.90" width="24" height="1.9" fill="#27344a"/><rect x="310.30" y="445.54" width="24" height="1.9" fill="#27344a"/><rect x="310.30" y="450.18" width="24" height="1.9" fill="#27344a"/><rect x="310.30" y="454.82" width="24" height="1.9" fill="#27344a"/><rect x="310.30" y="459.46" width="24" height="1.9" fill="#27344a"/><rect x="310.30" y="464.10" width="24" height="1.9" fill="#27344a"/><rect x="310.30" y="468.74" width="24" height="1.9" fill="#27344a"/><rect x="310.30" y="473.38" width="24" height="1.9" fill="#27344a"/><rect x="310.30" y="478.02" width="24" height="1.9" fill="#27344a"/><rect x="310.30" y="482.66" width="24" height="1.9" fill="#27344a"/><rect x="310.30" y="409.30" width="24" height="2.4" fill="#62a4f0"/><rect x="336.07" y="371.30" width="24" height="1.9" fill="#27344a"/><rect x="336.07" y="375.94" width="24" height="1.9" fill="#27344a"/><rect x="336.07" y="380.58" width="24" height="1.9" fill="#27344a"/><rect x="336.07" y="385.22" width="24" height="1.9" fill="#27344a"/><rect x="336.07" y="389.86" width="24" height="1.9" fill="#27344a"/><rect x="336.07" y="394.50" width="24" height="1.9" fill="#27344a"/><rect x="336.07" y="399.14" width="24" height="1.9" fill="#27344a"/><rect x="336.07" y="403.78" width="24" height="1.9" fill="#27344a"/><rect x="336.07" y="408.42" width="24" height="1.9" fill="#27344a"/><rect x="336.07" y="413.06" width="24" height="1.9" fill="#27344a"/><rect x="336.07" y="417.70" width="24" height="1.9" fill="#27344a"/><rect x="336.07" y="422.34" width="24" height="1.9" fill="#27344a"/><rect x="336.07" y="426.98" width="24" height="1.9" fill="#27344a"/><rect x="336.07" y="431.62" width="24" height="1.9" fill="#27344a"/><rect x="336.07" y="436.26" width="24" height="1.9" fill="#27344a"/><rect x="336.07" y="440.90" width="24" height="1.9" fill="#27344a"/><rect x="336.07" y="445.54" width="24" height="1.9" fill="#27344a"/><rect x="336.07" y="450.18" width="24" height="1.9" fill="#27344a"/><rect x="336.07" y="454.82" width="24" height="1.9" fill="#27344a"/><rect x="336.07" y="459.46" width="24" height="1.9" fill="#27344a"/><rect x="336.07" y="464.10" width="24" height="1.9" fill="#27344a"/><rect x="336.07" y="468.74" width="24" height="1.9" fill="#27344a"/><rect x="336.07" y="473.38" width="24" height="1.9" fill="#27344a"/><rect x="336.07" y="478.02" width="24" height="1.9" fill="#27344a"/><rect x="336.07" y="482.66" width="24" height="1.9" fill="#27344a"/><rect x="336.07" y="404.00" width="24" height="2.4" fill="#62a4f0"/><rect x="361.84" y="371.30" width="24" height="1.9" fill="#303d54"/><rect x="361.84" y="375.94" width="24" height="1.9" fill="#303d54"/><rect x="361.84" y="380.58" width="24" height="1.9" fill="#303d54"/><rect x="361.84" y="385.22" width="24" height="1.9" fill="#303d54"/><rect x="361.84" y="389.86" width="24" height="1.9" fill="#303d54"/><rect x="361.84" y="394.50" width="24" height="1.9" fill="#303d54"/><rect x="361.84" y="399.14" width="24" height="1.9" fill="#303d54"/><rect x="361.84" y="403.78" width="24" height="1.9" fill="#303d54"/><rect x="361.84" y="408.42" width="24" height="1.9" fill="#303d54"/><rect x="361.84" y="413.06" width="24" height="1.9" fill="#303d54"/><rect x="361.84" y="417.70" width="24" height="1.9" fill="#303d54"/><rect x="361.84" y="422.34" width="24" height="1.9" fill="#303d54"/><rect x="361.84" y="426.98" width="24" height="1.9" fill="#303d54"/><rect x="361.84" y="431.62" width="24" height="1.9" fill="#303d54"/><rect x="361.84" y="436.26" width="24" height="1.9" fill="#303d54"/><rect x="361.84" y="440.90" width="24" height="1.9" fill="#303d54"/><rect x="361.84" y="445.54" width="24" height="1.9" fill="#303d54"/><rect x="361.84" y="450.18" width="24" height="1.9" fill="#303d54"/><rect x="361.84" y="454.82" width="24" height="1.9" fill="#303d54"/><rect x="361.84" y="459.46" width="24" height="1.9" fill="#303d54"/><rect x="361.84" y="464.10" width="24" height="1.9" fill="#303d54"/><rect x="361.84" y="468.74" width="24" height="1.9" fill="#303d54"/><rect x="361.84" y="473.38" width="24" height="1.9" fill="#303d54"/><rect x="361.84" y="478.02" width="24" height="1.9" fill="#303d54"/><rect x="361.84" y="482.66" width="24" height="1.9" fill="#303d54"/><rect x="361.84" y="402.50" width="24" height="2.4" fill="#62a4f0"/><rect x="387.61" y="371.30" width="24" height="1.9" fill="#27344a"/><rect x="387.61" y="375.94" width="24" height="1.9" fill="#27344a"/><rect x="387.61" y="380.58" width="24" height="1.9" fill="#27344a"/><rect x="387.61" y="385.22" width="24" height="1.9" fill="#27344a"/><rect x="387.61" y="389.86" width="24" height="1.9" fill="#27344a"/><rect x="387.61" y="394.50" width="24" height="1.9" fill="#27344a"/><rect x="387.61" y="399.14" width="24" height="1.9" fill="#27344a"/><rect x="387.61" y="403.78" width="24" height="1.9" fill="#27344a"/><rect x="387.61" y="408.42" width="24" height="1.9" fill="#27344a"/><rect x="387.61" y="413.06" width="24" height="1.9" fill="#27344a"/><rect x="387.61" y="417.70" width="24" height="1.9" fill="#27344a"/><rect x="387.61" y="422.34" width="24" height="1.9" fill="#27344a"/><rect x="387.61" y="426.98" width="24" height="1.9" fill="#27344a"/><rect x="387.61" y="431.62" width="24" height="1.9" fill="#27344a"/><rect x="387.61" y="436.26" width="24" height="1.9" fill="#27344a"/><rect x="387.61" y="440.90" width="24" height="1.9" fill="#27344a"/><rect x="387.61" y="445.54" width="24" height="1.9" fill="#27344a"/><rect x="387.61" y="450.18" width="24" height="1.9" fill="#27344a"/><rect x="387.61" y="454.82" width="24" height="1.9" fill="#27344a"/><rect x="387.61" y="459.46" width="24" height="1.9" fill="#27344a"/><rect x="387.61" y="464.10" width="24" height="1.9" fill="#27344a"/><rect x="387.61" y="468.74" width="24" height="1.9" fill="#27344a"/><rect x="387.61" y="473.38" width="24" height="1.9" fill="#27344a"/><rect x="387.61" y="478.02" width="24" height="1.9" fill="#27344a"/><rect x="387.61" y="482.66" width="24" height="1.9" fill="#27344a"/><rect x="387.61" y="399.70" width="24" height="2.4" fill="#62a4f0"/><rect x="413.38" y="371.30" width="24" height="1.9" fill="#27344a"/><rect x="413.38" y="375.94" width="24" height="1.9" fill="#27344a"/><rect x="413.38" y="380.58" width="24" height="1.9" fill="#27344a"/><rect x="413.38" y="385.22" width="24" height="1.9" fill="#27344a"/><rect x="413.38" y="389.86" width="24" height="1.9" fill="#27344a"/><rect x="413.38" y="394.50" width="24" height="1.9" fill="#27344a"/><rect x="413.38" y="399.14" width="24" height="1.9" fill="#27344a"/><rect x="413.38" y="403.78" width="24" height="1.9" fill="#27344a"/><rect x="413.38" y="408.42" width="24" height="1.9" fill="#27344a"/><rect x="413.38" y="413.06" width="24" height="1.9" fill="#27344a"/><rect x="413.38" y="417.70" width="24" height="1.9" fill="#27344a"/><rect x="413.38" y="422.34" width="24" height="1.9" fill="#27344a"/><rect x="413.38" y="426.98" width="24" height="1.9" fill="#27344a"/><rect x="413.38" y="431.62" width="24" height="1.9" fill="#27344a"/><rect x="413.38" y="436.26" width="24" height="1.9" fill="#27344a"/><rect x="413.38" y="440.90" width="24" height="1.9" fill="#27344a"/><rect x="413.38" y="445.54" width="24" height="1.9" fill="#27344a"/><rect x="413.38" y="450.18" width="24" height="1.9" fill="#27344a"/><rect x="413.38" y="454.82" width="24" height="1.9" fill="#27344a"/><rect x="413.38" y="459.46" width="24" height="1.9" fill="#27344a"/><rect x="413.38" y="464.10" width="24" height="1.9" fill="#27344a"/><rect x="413.38" y="468.74" width="24" height="1.9" fill="#27344a"/><rect x="413.38" y="473.38" width="24" height="1.9" fill="#27344a"/><rect x="413.38" y="478.02" width="24" height="1.9" fill="#27344a"/><rect x="413.38" y="482.66" width="24" height="1.9" fill="#27344a"/><rect x="413.38" y="396.00" width="24" height="2.4" fill="#62a4f0"/><rect x="439.15" y="371.30" width="24" height="1.9" fill="#27344a"/><rect x="439.15" y="375.94" width="24" height="1.9" fill="#27344a"/><rect x="439.15" y="380.58" width="24" height="1.9" fill="#27344a"/><rect x="439.15" y="385.22" width="24" height="1.9" fill="#27344a"/><rect x="439.15" y="389.86" width="24" height="1.9" fill="#27344a"/><rect x="439.15" y="394.50" width="24" height="1.9" fill="#27344a"/><rect x="439.15" y="399.14" width="24" height="1.9" fill="#27344a"/><rect x="439.15" y="403.78" width="24" height="1.9" fill="#27344a"/><rect x="439.15" y="408.42" width="24" height="1.9" fill="#27344a"/><rect x="439.15" y="413.06" width="24" height="1.9" fill="#27344a"/><rect x="439.15" y="417.70" width="24" height="1.9" fill="#27344a"/><rect x="439.15" y="422.34" width="24" height="1.9" fill="#27344a"/><rect x="439.15" y="426.98" width="24" height="1.9" fill="#27344a"/><rect x="439.15" y="431.62" width="24" height="1.9" fill="#27344a"/><rect x="439.15" y="436.26" width="24" height="1.9" fill="#27344a"/><rect x="439.15" y="440.90" width="24" height="1.9" fill="#27344a"/><rect x="439.15" y="445.54" width="24" height="1.9" fill="#27344a"/><rect x="439.15" y="450.18" width="24" height="1.9" fill="#27344a"/><rect x="439.15" y="454.82" width="24" height="1.9" fill="#27344a"/><rect x="439.15" y="459.46" width="24" height="1.9" fill="#27344a"/><rect x="439.15" y="464.10" width="24" height="1.9" fill="#27344a"/><rect x="439.15" y="468.74" width="24" height="1.9" fill="#27344a"/><rect x="439.15" y="473.38" width="24" height="1.9" fill="#27344a"/><rect x="439.15" y="478.02" width="24" height="1.9" fill="#27344a"/><rect x="439.15" y="482.66" width="24" height="1.9" fill="#27344a"/><rect x="439.15" y="391.00" width="24" height="2.4" fill="#62a4f0"/><rect x="464.92" y="371.30" width="24" height="1.9" fill="#303d54"/><rect x="464.92" y="375.94" width="24" height="1.9" fill="#303d54"/><rect x="464.92" y="380.58" width="24" height="1.9" fill="#303d54"/><rect x="464.92" y="385.22" width="24" height="1.9" fill="#303d54"/><rect x="464.92" y="389.86" width="24" height="1.9" fill="#303d54"/><rect x="464.92" y="394.50" width="24" height="1.9" fill="#303d54"/><rect x="464.92" y="399.14" width="24" height="1.9" fill="#303d54"/><rect x="464.92" y="403.78" width="24" height="1.9" fill="#303d54"/><rect x="464.92" y="408.42" width="24" height="1.9" fill="#303d54"/><rect x="464.92" y="413.06" width="24" height="1.9" fill="#303d54"/><rect x="464.92" y="417.70" width="24" height="1.9" fill="#303d54"/><rect x="464.92" y="422.34" width="24" height="1.9" fill="#303d54"/><rect x="464.92" y="426.98" width="24" height="1.9" fill="#303d54"/><rect x="464.92" y="431.62" width="24" height="1.9" fill="#303d54"/><rect x="464.92" y="436.26" width="24" height="1.9" fill="#303d54"/><rect x="464.92" y="440.90" width="24" height="1.9" fill="#303d54"/><rect x="464.92" y="445.54" width="24" height="1.9" fill="#303d54"/><rect x="464.92" y="450.18" width="24" height="1.9" fill="#303d54"/><rect x="464.92" y="454.82" width="24" height="1.9" fill="#303d54"/><rect x="464.92" y="459.46" width="24" height="1.9" fill="#303d54"/><rect x="464.92" y="464.10" width="24" height="1.9" fill="#303d54"/><rect x="464.92" y="468.74" width="24" height="1.9" fill="#303d54"/><rect x="464.92" y="473.38" width="24" height="1.9" fill="#303d54"/><rect x="464.92" y="478.02" width="24" height="1.9" fill="#303d54"/><rect x="464.92" y="482.66" width="24" height="1.9" fill="#303d54"/><rect x="464.92" y="388.80" width="24" height="2.4" fill="#62a4f0"/><rect x="490.69" y="371.30" width="24" height="1.9" fill="#27344a"/><rect x="490.69" y="375.94" width="24" height="1.9" fill="#27344a"/><rect x="490.69" y="380.58" width="24" height="1.9" fill="#27344a"/><rect x="490.69" y="385.22" width="24" height="1.9" fill="#27344a"/><rect x="490.69" y="389.86" width="24" height="1.9" fill="#27344a"/><rect x="490.69" y="394.50" width="24" height="1.9" fill="#27344a"/><rect x="490.69" y="399.14" width="24" height="1.9" fill="#27344a"/><rect x="490.69" y="403.78" width="24" height="1.9" fill="#27344a"/><rect x="490.69" y="408.42" width="24" height="1.9" fill="#27344a"/><rect x="490.69" y="413.06" width="24" height="1.9" fill="#27344a"/><rect x="490.69" y="417.70" width="24" height="1.9" fill="#27344a"/><rect x="490.69" y="422.34" width="24" height="1.9" fill="#27344a"/><rect x="490.69" y="426.98" width="24" height="1.9" fill="#27344a"/><rect x="490.69" y="431.62" width="24" height="1.9" fill="#27344a"/><rect x="490.69" y="436.26" width="24" height="1.9" fill="#27344a"/><rect x="490.69" y="440.90" width="24" height="1.9" fill="#27344a"/><rect x="490.69" y="445.54" width="24" height="1.9" fill="#27344a"/><rect x="490.69" y="450.18" width="24" height="1.9" fill="#27344a"/><rect x="490.69" y="454.82" width="24" height="1.9" fill="#27344a"/><rect x="490.69" y="459.46" width="24" height="1.9" fill="#27344a"/><rect x="490.69" y="464.10" width="24" height="1.9" fill="#27344a"/><rect x="490.69" y="468.74" width="24" height="1.9" fill="#27344a"/><rect x="490.69" y="473.38" width="24" height="1.9" fill="#27344a"/><rect x="490.69" y="478.02" width="24" height="1.9" fill="#27344a"/><rect x="490.69" y="482.66" width="24" height="1.9" fill="#27344a"/><rect x="490.69" y="388.80" width="24" height="2.4" fill="#62a4f0"/><rect x="516.46" y="371.30" width="24" height="1.9" fill="#27344a"/><rect x="516.46" y="375.94" width="24" height="1.9" fill="#27344a"/><rect x="516.46" y="380.58" width="24" height="1.9" fill="#27344a"/><rect x="516.46" y="385.22" width="24" height="1.9" fill="#27344a"/><rect x="516.46" y="389.86" width="24" height="1.9" fill="#27344a"/><rect x="516.46" y="394.50" width="24" height="1.9" fill="#27344a"/><rect x="516.46" y="399.14" width="24" height="1.9" fill="#27344a"/><rect x="516.46" y="403.78" width="24" height="1.9" fill="#27344a"/><rect x="516.46" y="408.42" width="24" height="1.9" fill="#27344a"/><rect x="516.46" y="413.06" width="24" height="1.9" fill="#27344a"/><rect x="516.46" y="417.70" width="24" height="1.9" fill="#27344a"/><rect x="516.46" y="422.34" width="24" height="1.9" fill="#27344a"/><rect x="516.46" y="426.98" width="24" height="1.9" fill="#27344a"/><rect x="516.46" y="431.62" width="24" height="1.9" fill="#27344a"/><rect x="516.46" y="436.26" width="24" height="1.9" fill="#27344a"/><rect x="516.46" y="440.90" width="24" height="1.9" fill="#27344a"/><rect x="516.46" y="445.54" width="24" height="1.9" fill="#27344a"/><rect x="516.46" y="450.18" width="24" height="1.9" fill="#27344a"/><rect x="516.46" y="454.82" width="24" height="1.9" fill="#27344a"/><rect x="516.46" y="459.46" width="24" height="1.9" fill="#27344a"/><rect x="516.46" y="464.10" width="24" height="1.9" fill="#27344a"/><rect x="516.46" y="468.74" width="24" height="1.9" fill="#27344a"/><rect x="516.46" y="473.38" width="24" height="1.9" fill="#27344a"/><rect x="516.46" y="478.02" width="24" height="1.9" fill="#27344a"/><rect x="516.46" y="482.66" width="24" height="1.9" fill="#27344a"/><rect x="516.46" y="387.90" width="24" height="2.4" fill="#62a4f0"/><rect x="542.23" y="371.30" width="24" height="1.9" fill="#27344a"/><rect x="542.23" y="375.94" width="24" height="1.9" fill="#27344a"/><rect x="542.23" y="380.58" width="24" height="1.9" fill="#27344a"/><rect x="542.23" y="385.22" width="24" height="1.9" fill="#27344a"/><rect x="542.23" y="389.86" width="24" height="1.9" fill="#27344a"/><rect x="542.23" y="394.50" width="24" height="1.9" fill="#27344a"/><rect x="542.23" y="399.14" width="24" height="1.9" fill="#27344a"/><rect x="542.23" y="403.78" width="24" height="1.9" fill="#27344a"/><rect x="542.23" y="408.42" width="24" height="1.9" fill="#27344a"/><rect x="542.23" y="413.06" width="24" height="1.9" fill="#27344a"/><rect x="542.23" y="417.70" width="24" height="1.9" fill="#27344a"/><rect x="542.23" y="422.34" width="24" height="1.9" fill="#27344a"/><rect x="542.23" y="426.98" width="24" height="1.9" fill="#27344a"/><rect x="542.23" y="431.62" width="24" height="1.9" fill="#27344a"/><rect x="542.23" y="436.26" width="24" height="1.9" fill="#27344a"/><rect x="542.23" y="440.90" width="24" height="1.9" fill="#27344a"/><rect x="542.23" y="445.54" width="24" height="1.9" fill="#27344a"/><rect x="542.23" y="450.18" width="24" height="1.9" fill="#27344a"/><rect x="542.23" y="454.82" width="24" height="1.9" fill="#27344a"/><rect x="542.23" y="459.46" width="24" height="1.9" fill="#27344a"/><rect x="542.23" y="464.10" width="24" height="1.9" fill="#27344a"/><rect x="542.23" y="468.74" width="24" height="1.9" fill="#27344a"/><rect x="542.23" y="473.38" width="24" height="1.9" fill="#27344a"/><rect x="542.23" y="478.02" width="24" height="1.9" fill="#27344a"/><rect x="542.23" y="482.66" width="24" height="1.9" fill="#27344a"/><rect x="542.23" y="384.50" width="24" height="2.4" fill="#62a4f0"/><rect x="568.00" y="371.30" width="24" height="1.9" fill="#303d54"/><rect x="568.00" y="375.94" width="24" height="1.9" fill="#303d54"/><rect x="568.00" y="380.58" width="24" height="1.9" fill="#303d54"/><rect x="568.00" y="385.22" width="24" height="1.9" fill="#303d54"/><rect x="568.00" y="389.86" width="24" height="1.9" fill="#303d54"/><rect x="568.00" y="394.50" width="24" height="1.9" fill="#303d54"/><rect x="568.00" y="399.14" width="24" height="1.9" fill="#303d54"/><rect x="568.00" y="403.78" width="24" height="1.9" fill="#303d54"/><rect x="568.00" y="408.42" width="24" height="1.9" fill="#303d54"/><rect x="568.00" y="413.06" width="24" height="1.9" fill="#303d54"/><rect x="568.00" y="417.70" width="24" height="1.9" fill="#303d54"/><rect x="568.00" y="422.34" width="24" height="1.9" fill="#303d54"/><rect x="568.00" y="426.98" width="24" height="1.9" fill="#303d54"/><rect x="568.00" y="431.62" width="24" height="1.9" fill="#303d54"/><rect x="568.00" y="436.26" width="24" height="1.9" fill="#303d54"/><rect x="568.00" y="440.90" width="24" height="1.9" fill="#303d54"/><rect x="568.00" y="445.54" width="24" height="1.9" fill="#303d54"/><rect x="568.00" y="450.18" width="24" height="1.9" fill="#303d54"/><rect x="568.00" y="454.82" width="24" height="1.9" fill="#303d54"/><rect x="568.00" y="459.46" width="24" height="1.9" fill="#303d54"/><rect x="568.00" y="464.10" width="24" height="1.9" fill="#303d54"/><rect x="568.00" y="468.74" width="24" height="1.9" fill="#303d54"/><rect x="568.00" y="473.38" width="24" height="1.9" fill="#303d54"/><rect x="568.00" y="478.02" width="24" height="1.9" fill="#303d54"/><rect x="568.00" y="482.66" width="24" height="1.9" fill="#303d54"/><rect x="568.00" y="381.70" width="24" height="2.4" fill="#62a4f0"/><rect x="593.77" y="371.30" width="24" height="1.9" fill="#27344a"/><rect x="593.77" y="375.94" width="24" height="1.9" fill="#27344a"/><rect x="593.77" y="380.58" width="24" height="1.9" fill="#27344a"/><rect x="593.77" y="385.22" width="24" height="1.9" fill="#27344a"/><rect x="593.77" y="389.86" width="24" height="1.9" fill="#27344a"/><rect x="593.77" y="394.50" width="24" height="1.9" fill="#27344a"/><rect x="593.77" y="399.14" width="24" height="1.9" fill="#27344a"/><rect x="593.77" y="403.78" width="24" height="1.9" fill="#27344a"/><rect x="593.77" y="408.42" width="24" height="1.9" fill="#27344a"/><rect x="593.77" y="413.06" width="24" height="1.9" fill="#27344a"/><rect x="593.77" y="417.70" width="24" height="1.9" fill="#27344a"/><rect x="593.77" y="422.34" width="24" height="1.9" fill="#27344a"/><rect x="593.77" y="426.98" width="24" height="1.9" fill="#27344a"/><rect x="593.77" y="431.62" width="24" height="1.9" fill="#27344a"/><rect x="593.77" y="436.26" width="24" height="1.9" fill="#27344a"/><rect x="593.77" y="440.90" width="24" height="1.9" fill="#27344a"/><rect x="593.77" y="445.54" width="24" height="1.9" fill="#27344a"/><rect x="593.77" y="450.18" width="24" height="1.9" fill="#27344a"/><rect x="593.77" y="454.82" width="24" height="1.9" fill="#27344a"/><rect x="593.77" y="459.46" width="24" height="1.9" fill="#27344a"/><rect x="593.77" y="464.10" width="24" height="1.9" fill="#27344a"/><rect x="593.77" y="468.74" width="24" height="1.9" fill="#27344a"/><rect x="593.77" y="473.38" width="24" height="1.9" fill="#27344a"/><rect x="593.77" y="478.02" width="24" height="1.9" fill="#27344a"/><rect x="593.77" y="482.66" width="24" height="1.9" fill="#27344a"/><rect x="593.77" y="376.80" width="24" height="2.4" fill="#62a4f0"/><rect x="619.54" y="371.30" width="24" height="1.9" fill="#27344a"/><rect x="619.54" y="375.94" width="24" height="1.9" fill="#27344a"/><rect x="619.54" y="380.58" width="24" height="1.9" fill="#27344a"/><rect x="619.54" y="385.22" width="24" height="1.9" fill="#27344a"/><rect x="619.54" y="389.86" width="24" height="1.9" fill="#27344a"/><rect x="619.54" y="394.50" width="24" height="1.9" fill="#27344a"/><rect x="619.54" y="399.14" width="24" height="1.9" fill="#27344a"/><rect x="619.54" y="403.78" width="24" height="1.9" fill="#27344a"/><rect x="619.54" y="408.42" width="24" height="1.9" fill="#27344a"/><rect x="619.54" y="413.06" width="24" height="1.9" fill="#27344a"/><rect x="619.54" y="417.70" width="24" height="1.9" fill="#27344a"/><rect x="619.54" y="422.34" width="24" height="1.9" fill="#27344a"/><rect x="619.54" y="426.98" width="24" height="1.9" fill="#27344a"/><rect x="619.54" y="431.62" width="24" height="1.9" fill="#27344a"/><rect x="619.54" y="436.26" width="24" height="1.9" fill="#27344a"/><rect x="619.54" y="440.90" width="24" height="1.9" fill="#27344a"/><rect x="619.54" y="445.54" width="24" height="1.9" fill="#27344a"/><rect x="619.54" y="450.18" width="24" height="1.9" fill="#27344a"/><rect x="619.54" y="454.82" width="24" height="1.9" fill="#27344a"/><rect x="619.54" y="459.46" width="24" height="1.9" fill="#27344a"/><rect x="619.54" y="464.10" width="24" height="1.9" fill="#27344a"/><rect x="619.54" y="468.74" width="24" height="1.9" fill="#27344a"/><rect x="619.54" y="473.38" width="24" height="1.9" fill="#27344a"/><rect x="619.54" y="478.02" width="24" height="1.9" fill="#27344a"/><rect x="619.54" y="482.66" width="24" height="1.9" fill="#27344a"/><rect x="619.54" y="376.20" width="24" height="2.4" fill="#62a4f0"/><rect x="645.31" y="371.30" width="24" height="1.9" fill="#27344a"/><rect x="645.31" y="375.94" width="24" height="1.9" fill="#27344a"/><rect x="645.31" y="380.58" width="24" height="1.9" fill="#27344a"/><rect x="645.31" y="385.22" width="24" height="1.9" fill="#27344a"/><rect x="645.31" y="389.86" width="24" height="1.9" fill="#27344a"/><rect x="645.31" y="394.50" width="24" height="1.9" fill="#27344a"/><rect x="645.31" y="399.14" width="24" height="1.9" fill="#27344a"/><rect x="645.31" y="403.78" width="24" height="1.9" fill="#27344a"/><rect x="645.31" y="408.42" width="24" height="1.9" fill="#27344a"/><rect x="645.31" y="413.06" width="24" height="1.9" fill="#27344a"/><rect x="645.31" y="417.70" width="24" height="1.9" fill="#27344a"/><rect x="645.31" y="422.34" width="24" height="1.9" fill="#27344a"/><rect x="645.31" y="426.98" width="24" height="1.9" fill="#27344a"/><rect x="645.31" y="431.62" width="24" height="1.9" fill="#27344a"/><rect x="645.31" y="436.26" width="24" height="1.9" fill="#27344a"/><rect x="645.31" y="440.90" width="24" height="1.9" fill="#27344a"/><rect x="645.31" y="445.54" width="24" height="1.9" fill="#27344a"/><rect x="645.31" y="450.18" width="24" height="1.9" fill="#27344a"/><rect x="645.31" y="454.82" width="24" height="1.9" fill="#27344a"/><rect x="645.31" y="459.46" width="24" height="1.9" fill="#27344a"/><rect x="645.31" y="464.10" width="24" height="1.9" fill="#27344a"/><rect x="645.31" y="468.74" width="24" height="1.9" fill="#27344a"/><rect x="645.31" y="473.38" width="24" height="1.9" fill="#27344a"/><rect x="645.31" y="478.02" width="24" height="1.9" fill="#27344a"/><rect x="645.31" y="482.66" width="24" height="1.9" fill="#27344a"/><rect x="645.31" y="378.50" width="24" height="2.4" fill="#62a4f0"/><rect x="671.08" y="371.30" width="24" height="1.9" fill="#303d54"/><rect x="671.08" y="375.94" width="24" height="1.9" fill="#303d54"/><rect x="671.08" y="380.58" width="24" height="1.9" fill="#303d54"/><rect x="671.08" y="385.22" width="24" height="1.9" fill="#303d54"/><rect x="671.08" y="389.86" width="24" height="1.9" fill="#303d54"/><rect x="671.08" y="394.50" width="24" height="1.9" fill="#303d54"/><rect x="671.08" y="399.14" width="24" height="1.9" fill="#303d54"/><rect x="671.08" y="403.78" width="24" height="1.9" fill="#303d54"/><rect x="671.08" y="408.42" width="24" height="1.9" fill="#303d54"/><rect x="671.08" y="413.06" width="24" height="1.9" fill="#303d54"/><rect x="671.08" y="417.70" width="24" height="1.9" fill="#303d54"/><rect x="671.08" y="422.34" width="24" height="1.9" fill="#303d54"/><rect x="671.08" y="426.98" width="24" height="1.9" fill="#303d54"/><rect x="671.08" y="431.62" width="24" height="1.9" fill="#303d54"/><rect x="671.08" y="436.26" width="24" height="1.9" fill="#303d54"/><rect x="671.08" y="440.90" width="24" height="1.9" fill="#303d54"/><rect x="671.08" y="445.54" width="24" height="1.9" fill="#303d54"/><rect x="671.08" y="450.18" width="24" height="1.9" fill="#303d54"/><rect x="671.08" y="454.82" width="24" height="1.9" fill="#303d54"/><rect x="671.08" y="459.46" width="24" height="1.9" fill="#303d54"/><rect x="671.08" y="464.10" width="24" height="1.9" fill="#303d54"/><rect x="671.08" y="468.74" width="24" height="1.9" fill="#303d54"/><rect x="671.08" y="473.38" width="24" height="1.9" fill="#303d54"/><rect x="671.08" y="478.02" width="24" height="1.9" fill="#303d54"/><rect x="671.08" y="482.66" width="24" height="1.9" fill="#303d54"/><rect x="671.08" y="382.30" width="24" height="2.4" fill="#62a4f0"/><rect x="696.85" y="371.30" width="24" height="1.9" fill="#27344a"/><rect x="696.85" y="375.94" width="24" height="1.9" fill="#27344a"/><rect x="696.85" y="380.58" width="24" height="1.9" fill="#27344a"/><rect x="696.85" y="385.22" width="24" height="1.9" fill="#27344a"/><rect x="696.85" y="389.86" width="24" height="1.9" fill="#27344a"/><rect x="696.85" y="394.50" width="24" height="1.9" fill="#27344a"/><rect x="696.85" y="399.14" width="24" height="1.9" fill="#27344a"/><rect x="696.85" y="403.78" width="24" height="1.9" fill="#27344a"/><rect x="696.85" y="408.42" width="24" height="1.9" fill="#27344a"/><rect x="696.85" y="413.06" width="24" height="1.9" fill="#27344a"/><rect x="696.85" y="417.70" width="24" height="1.9" fill="#27344a"/><rect x="696.85" y="422.34" width="24" height="1.9" fill="#27344a"/><rect x="696.85" y="426.98" width="24" height="1.9" fill="#27344a"/><rect x="696.85" y="431.62" width="24" height="1.9" fill="#27344a"/><rect x="696.85" y="436.26" width="24" height="1.9" fill="#27344a"/><rect x="696.85" y="440.90" width="24" height="1.9" fill="#27344a"/><rect x="696.85" y="445.54" width="24" height="1.9" fill="#27344a"/><rect x="696.85" y="450.18" width="24" height="1.9" fill="#27344a"/><rect x="696.85" y="454.82" width="24" height="1.9" fill="#27344a"/><rect x="696.85" y="459.46" width="24" height="1.9" fill="#27344a"/><rect x="696.85" y="464.10" width="24" height="1.9" fill="#27344a"/><rect x="696.85" y="468.74" width="24" height="1.9" fill="#27344a"/><rect x="696.85" y="473.38" width="24" height="1.9" fill="#27344a"/><rect x="696.85" y="478.02" width="24" height="1.9" fill="#27344a"/><rect x="696.85" y="482.66" width="24" height="1.9" fill="#27344a"/><rect x="696.85" y="382.30" width="24" height="2.4" fill="#62a4f0"/><rect x="722.62" y="371.30" width="24" height="1.9" fill="#27344a"/><rect x="722.62" y="375.94" width="24" height="1.9" fill="#27344a"/><rect x="722.62" y="380.58" width="24" height="1.9" fill="#27344a"/><rect x="722.62" y="385.22" width="24" height="1.9" fill="#27344a"/><rect x="722.62" y="389.86" width="24" height="1.9" fill="#27344a"/><rect x="722.62" y="394.50" width="24" height="1.9" fill="#27344a"/><rect x="722.62" y="399.14" width="24" height="1.9" fill="#27344a"/><rect x="722.62" y="403.78" width="24" height="1.9" fill="#27344a"/><rect x="722.62" y="408.42" width="24" height="1.9" fill="#27344a"/><rect x="722.62" y="413.06" width="24" height="1.9" fill="#27344a"/><rect x="722.62" y="417.70" width="24" height="1.9" fill="#27344a"/><rect x="722.62" y="422.34" width="24" height="1.9" fill="#27344a"/><rect x="722.62" y="426.98" width="24" height="1.9" fill="#27344a"/><rect x="722.62" y="431.62" width="24" height="1.9" fill="#27344a"/><rect x="722.62" y="436.26" width="24" height="1.9" fill="#27344a"/><rect x="722.62" y="440.90" width="24" height="1.9" fill="#27344a"/><rect x="722.62" y="445.54" width="24" height="1.9" fill="#27344a"/><rect x="722.62" y="450.18" width="24" height="1.9" fill="#27344a"/><rect x="722.62" y="454.82" width="24" height="1.9" fill="#27344a"/><rect x="722.62" y="459.46" width="24" height="1.9" fill="#27344a"/><rect x="722.62" y="464.10" width="24" height="1.9" fill="#27344a"/><rect x="722.62" y="468.74" width="24" height="1.9" fill="#27344a"/><rect x="722.62" y="473.38" width="24" height="1.9" fill="#27344a"/><rect x="722.62" y="478.02" width="24" height="1.9" fill="#27344a"/><rect x="722.62" y="482.66" width="24" height="1.9" fill="#27344a"/><rect x="722.62" y="381.70" width="24" height="2.4" fill="#62a4f0"/><rect x="748.39" y="371.30" width="24" height="1.9" fill="#27344a"/><rect x="748.39" y="375.94" width="24" height="1.9" fill="#27344a"/><rect x="748.39" y="380.58" width="24" height="1.9" fill="#27344a"/><rect x="748.39" y="385.22" width="24" height="1.9" fill="#27344a"/><rect x="748.39" y="389.86" width="24" height="1.9" fill="#27344a"/><rect x="748.39" y="394.50" width="24" height="1.9" fill="#27344a"/><rect x="748.39" y="399.14" width="24" height="1.9" fill="#27344a"/><rect x="748.39" y="403.78" width="24" height="1.9" fill="#27344a"/><rect x="748.39" y="408.42" width="24" height="1.9" fill="#27344a"/><rect x="748.39" y="413.06" width="24" height="1.9" fill="#27344a"/><rect x="748.39" y="417.70" width="24" height="1.9" fill="#27344a"/><rect x="748.39" y="422.34" width="24" height="1.9" fill="#27344a"/><rect x="748.39" y="426.98" width="24" height="1.9" fill="#27344a"/><rect x="748.39" y="431.62" width="24" height="1.9" fill="#27344a"/><rect x="748.39" y="436.26" width="24" height="1.9" fill="#27344a"/><rect x="748.39" y="440.90" width="24" height="1.9" fill="#27344a"/><rect x="748.39" y="445.54" width="24" height="1.9" fill="#27344a"/><rect x="748.39" y="450.18" width="24" height="1.9" fill="#27344a"/><rect x="748.39" y="454.82" width="24" height="1.9" fill="#27344a"/><rect x="748.39" y="459.46" width="24" height="1.9" fill="#27344a"/><rect x="748.39" y="464.10" width="24" height="1.9" fill="#27344a"/><rect x="748.39" y="468.74" width="24" height="1.9" fill="#27344a"/><rect x="748.39" y="473.38" width="24" height="1.9" fill="#27344a"/><rect x="748.39" y="478.02" width="24" height="1.9" fill="#27344a"/><rect x="748.39" y="482.66" width="24" height="1.9" fill="#27344a"/><rect x="748.39" y="384.00" width="24" height="2.4" fill="#62a4f0"/><rect x="774.16" y="371.30" width="24" height="1.9" fill="#303d54"/><rect x="774.16" y="375.94" width="24" height="1.9" fill="#303d54"/><rect x="774.16" y="380.58" width="24" height="1.9" fill="#303d54"/><rect x="774.16" y="385.22" width="24" height="1.9" fill="#303d54"/><rect x="774.16" y="389.86" width="24" height="1.9" fill="#303d54"/><rect x="774.16" y="394.50" width="24" height="1.9" fill="#303d54"/><rect x="774.16" y="399.14" width="24" height="1.9" fill="#303d54"/><rect x="774.16" y="403.78" width="24" height="1.9" fill="#303d54"/><rect x="774.16" y="408.42" width="24" height="1.9" fill="#303d54"/><rect x="774.16" y="413.06" width="24" height="1.9" fill="#303d54"/><rect x="774.16" y="417.70" width="24" height="1.9" fill="#303d54"/><rect x="774.16" y="422.34" width="24" height="1.9" fill="#303d54"/><rect x="774.16" y="426.98" width="24" height="1.9" fill="#303d54"/><rect x="774.16" y="431.62" width="24" height="1.9" fill="#303d54"/><rect x="774.16" y="436.26" width="24" height="1.9" fill="#303d54"/><rect x="774.16" y="440.90" width="24" height="1.9" fill="#303d54"/><rect x="774.16" y="445.54" width="24" height="1.9" fill="#303d54"/><rect x="774.16" y="450.18" width="24" height="1.9" fill="#303d54"/><rect x="774.16" y="454.82" width="24" height="1.9" fill="#303d54"/><rect x="774.16" y="459.46" width="24" height="1.9" fill="#303d54"/><rect x="774.16" y="464.10" width="24" height="1.9" fill="#303d54"/><rect x="774.16" y="468.74" width="24" height="1.9" fill="#303d54"/><rect x="774.16" y="473.38" width="24" height="1.9" fill="#303d54"/><rect x="774.16" y="478.02" width="24" height="1.9" fill="#303d54"/><rect x="774.16" y="482.66" width="24" height="1.9" fill="#303d54"/><rect x="774.16" y="383.30" width="24" height="2.4" fill="#62a4f0"/><rect x="799.93" y="371.30" width="24" height="1.9" fill="#27344a"/><rect x="799.93" y="375.94" width="24" height="1.9" fill="#27344a"/><rect x="799.93" y="380.58" width="24" height="1.9" fill="#27344a"/><rect x="799.93" y="385.22" width="24" height="1.9" fill="#27344a"/><rect x="799.93" y="389.86" width="24" height="1.9" fill="#27344a"/><rect x="799.93" y="394.50" width="24" height="1.9" fill="#27344a"/><rect x="799.93" y="399.14" width="24" height="1.9" fill="#27344a"/><rect x="799.93" y="403.78" width="24" height="1.9" fill="#27344a"/><rect x="799.93" y="408.42" width="24" height="1.9" fill="#27344a"/><rect x="799.93" y="413.06" width="24" height="1.9" fill="#27344a"/><rect x="799.93" y="417.70" width="24" height="1.9" fill="#27344a"/><rect x="799.93" y="422.34" width="24" height="1.9" fill="#27344a"/><rect x="799.93" y="426.98" width="24" height="1.9" fill="#27344a"/><rect x="799.93" y="431.62" width="24" height="1.9" fill="#27344a"/><rect x="799.93" y="436.26" width="24" height="1.9" fill="#27344a"/><rect x="799.93" y="440.90" width="24" height="1.9" fill="#27344a"/><rect x="799.93" y="445.54" width="24" height="1.9" fill="#27344a"/><rect x="799.93" y="450.18" width="24" height="1.9" fill="#27344a"/><rect x="799.93" y="454.82" width="24" height="1.9" fill="#27344a"/><rect x="799.93" y="459.46" width="24" height="1.9" fill="#27344a"/><rect x="799.93" y="464.10" width="24" height="1.9" fill="#27344a"/><rect x="799.93" y="468.74" width="24" height="1.9" fill="#27344a"/><rect x="799.93" y="473.38" width="24" height="1.9" fill="#27344a"/><rect x="799.93" y="478.02" width="24" height="1.9" fill="#27344a"/><rect x="799.93" y="482.66" width="24" height="1.9" fill="#27344a"/><rect x="799.93" y="379.40" width="24" height="2.4" fill="#62a4f0"/><rect x="825.70" y="371.30" width="24" height="1.9" fill="#27344a"/><rect x="825.70" y="375.94" width="24" height="1.9" fill="#27344a"/><rect x="825.70" y="380.58" width="24" height="1.9" fill="#27344a"/><rect x="825.70" y="385.22" width="24" height="1.9" fill="#27344a"/><rect x="825.70" y="389.86" width="24" height="1.9" fill="#27344a"/><rect x="825.70" y="394.50" width="24" height="1.9" fill="#27344a"/><rect x="825.70" y="399.14" width="24" height="1.9" fill="#27344a"/><rect x="825.70" y="403.78" width="24" height="1.9" fill="#27344a"/><rect x="825.70" y="408.42" width="24" height="1.9" fill="#27344a"/><rect x="825.70" y="413.06" width="24" height="1.9" fill="#27344a"/><rect x="825.70" y="417.70" width="24" height="1.9" fill="#27344a"/><rect x="825.70" y="422.34" width="24" height="1.9" fill="#27344a"/><rect x="825.70" y="426.98" width="24" height="1.9" fill="#27344a"/><rect x="825.70" y="431.62" width="24" height="1.9" fill="#27344a"/><rect x="825.70" y="436.26" width="24" height="1.9" fill="#27344a"/><rect x="825.70" y="440.90" width="24" height="1.9" fill="#27344a"/><rect x="825.70" y="445.54" width="24" height="1.9" fill="#27344a"/><rect x="825.70" y="450.18" width="24" height="1.9" fill="#27344a"/><rect x="825.70" y="454.82" width="24" height="1.9" fill="#27344a"/><rect x="825.70" y="459.46" width="24" height="1.9" fill="#27344a"/><rect x="825.70" y="464.10" width="24" height="1.9" fill="#27344a"/><rect x="825.70" y="468.74" width="24" height="1.9" fill="#27344a"/><rect x="825.70" y="473.38" width="24" height="1.9" fill="#27344a"/><rect x="825.70" y="478.02" width="24" height="1.9" fill="#27344a"/><rect x="825.70" y="482.66" width="24" height="1.9" fill="#27344a"/><rect x="825.70" y="378.50" width="24" height="2.4" fill="#62a4f0"/><rect x="851.47" y="371.30" width="24" height="1.9" fill="#27344a"/><rect x="851.47" y="375.94" width="24" height="1.9" fill="#27344a"/><rect x="851.47" y="380.58" width="24" height="1.9" fill="#27344a"/><rect x="851.47" y="385.22" width="24" height="1.9" fill="#27344a"/><rect x="851.47" y="389.86" width="24" height="1.9" fill="#27344a"/><rect x="851.47" y="394.50" width="24" height="1.9" fill="#27344a"/><rect x="851.47" y="399.14" width="24" height="1.9" fill="#27344a"/><rect x="851.47" y="403.78" width="24" height="1.9" fill="#27344a"/><rect x="851.47" y="408.42" width="24" height="1.9" fill="#27344a"/><rect x="851.47" y="413.06" width="24" height="1.9" fill="#27344a"/><rect x="851.47" y="417.70" width="24" height="1.9" fill="#27344a"/><rect x="851.47" y="422.34" width="24" height="1.9" fill="#27344a"/><rect x="851.47" y="426.98" width="24" height="1.9" fill="#27344a"/><rect x="851.47" y="431.62" width="24" height="1.9" fill="#27344a"/><rect x="851.47" y="436.26" width="24" height="1.9" fill="#27344a"/><rect x="851.47" y="440.90" width="24" height="1.9" fill="#27344a"/><rect x="851.47" y="445.54" width="24" height="1.9" fill="#27344a"/><rect x="851.47" y="450.18" width="24" height="1.9" fill="#27344a"/><rect x="851.47" y="454.82" width="24" height="1.9" fill="#27344a"/><rect x="851.47" y="459.46" width="24" height="1.9" fill="#27344a"/><rect x="851.47" y="464.10" width="24" height="1.9" fill="#27344a"/><rect x="851.47" y="468.74" width="24" height="1.9" fill="#27344a"/><rect x="851.47" y="473.38" width="24" height="1.9" fill="#27344a"/><rect x="851.47" y="478.02" width="24" height="1.9" fill="#27344a"/><rect x="851.47" y="482.66" width="24" height="1.9" fill="#27344a"/><rect x="851.47" y="378.80" width="24" height="2.4" fill="#62a4f0"/></svg><div class="t" style="box-sizing:border-box;left:5.2px;top:370.5px;width:42.6px;height:14px;line-height:11.4px;border:1.8px solid #4a86d8;border-radius:3.5px;text-align:center;font-size:9px;color:#8fb8ec;background:#03070d">Max</div><div class="t" style="box-sizing:border-box;left:5.2px;top:388.7px;width:42.6px;height:14px;line-height:11.4px;border:1.8px solid #4a86d8;border-radius:3.5px;text-align:center;font-size:9px;color:#8fb8ec;background:#03070d">100</div><div class="t" style="box-sizing:border-box;left:5.2px;top:469.4px;width:42.6px;height:14px;line-height:11.4px;border:1.8px solid #4a86d8;border-radius:3.5px;text-align:center;font-size:9px;color:#8fb8ec;background:#03070d">Min</div><div class="t" style="left:5.3px;top:491px;width:47px;height:60.5px;border:2px solid #4a90e2;border-radius:5px;background:#1c2130;text-align:center;line-height:62px;font-size:14px;color:#5f9fec">1</div><div class="t" style="left:61.3px;top:491px;width:47px;height:60.5px;border:2px solid #2a4f80;border-radius:5px;background:#1c2130;text-align:center;line-height:62px;font-size:14px;color:#5f9fec">+</div><div class="t" style="left:117.3px;top:491px;width:47px;height:60.5px;border:2px solid #162842;border-radius:5px;background:#0b111c;text-align:center;line-height:62px;font-size:14px;color:#5f9fec"></div><div class="t" style="left:173.3px;top:491px;width:47px;height:60.5px;border:2px solid #162842;border-radius:5px;background:#0b111c;text-align:center;line-height:62px;font-size:14px;color:#5f9fec"></div><div class="t" style="left:229.3px;top:491px;width:47px;height:60.5px;border:2px solid #162842;border-radius:5px;background:#0b111c;text-align:center;line-height:62px;font-size:14px;color:#5f9fec"></div><div class="t" style="left:285.3px;top:491px;width:47px;height:60.5px;border:2px solid #162842;border-radius:5px;background:#0b111c;text-align:center;line-height:62px;font-size:14px;color:#5f9fec"></div><div class="t" style="left:341.3px;top:491px;width:47px;height:60.5px;border:2px solid #162842;border-radius:5px;background:#0b111c;text-align:center;line-height:62px;font-size:14px;color:#5f9fec"></div><div class="t" style="left:397.3px;top:491px;width:47px;height:60.5px;border:2px solid #162842;border-radius:5px;background:#0b111c;text-align:center;line-height:62px;font-size:14px;color:#5f9fec"></div><div class="t" style="left:453.3px;top:491px;width:47px;height:60.5px;border:2px solid #162842;border-radius:5px;background:#0b111c;text-align:center;line-height:62px;font-size:14px;color:#5f9fec"></div><div class="t" style="left:509.3px;top:491px;width:47px;height:60.5px;border:2px solid #162842;border-radius:5px;background:#0b111c;text-align:center;line-height:62px;font-size:14px;color:#5f9fec"></div><div class="t" style="left:565.3px;top:491px;width:47px;height:60.5px;border:2px solid #162842;border-radius:5px;background:#0b111c;text-align:center;line-height:62px;font-size:14px;color:#5f9fec"></div><div class="t" style="left:621.3px;top:491px;width:47px;height:60.5px;border:2px solid #162842;border-radius:5px;background:#0b111c;text-align:center;line-height:62px;font-size:14px;color:#5f9fec"></div><div class="t" style="left:677.3px;top:491px;width:47px;height:60.5px;border:2px solid #162842;border-radius:5px;background:#0b111c;text-align:center;line-height:62px;font-size:14px;color:#5f9fec"></div><div class="t" style="left:733.3px;top:491px;width:47px;height:60.5px;border:2px solid #162842;border-radius:5px;background:#0b111c;text-align:center;line-height:62px;font-size:14px;color:#5f9fec"></div><div class="t" style="left:789.3px;top:491px;width:47px;height:60.5px;border:2px solid #162842;border-radius:5px;background:#0b111c;text-align:center;line-height:62px;font-size:14px;color:#5f9fec"></div><div class="t" style="left:845.3px;top:491px;width:47px;height:60.5px;border:2px solid #162842;border-radius:5px;background:#0b111c;text-align:center;line-height:62px;font-size:14px;color:#5f9fec"></div><div style="position:absolute;left:0;top:561px;width:902px;height:22px;background:#0e1014"></div>
<div class="t" style="left:23px;top:566px;font-size:10.5px;color:#d8d8d8">Scale</div>
<div class="t" style="left:68px;top:564px;width:328px;height:16.5px;line-height:16.5px;background:#1b2029;text-align:center;font-size:11px;color:#5f9fec">C Major</div>
<div class="t" style="left:421px;top:566px;font-size:10.5px;color:#d8d8d8">Mode</div>
<div class="t" style="left:473px;top:564px;width:57px;height:16.5px;line-height:16.5px;background:#1d232d;text-align:center;font-size:11px;color:#5f9fec">Arp</div>
<div class="t" style="left:531.7px;top:564px;width:70px;height:16.5px;line-height:16.5px;background:#4a7cc4;font-size:11px;color:#f4f4f4"><span style="position:absolute;left:14px">Seq</span><svg style="position:absolute;left:55px;top:3px" width="8" height="10"><g fill="#f4f4f4"><rect x="0" y="0.4" width="7.3" height="1.9"/><rect x="0" y="2.8" width="7.3" height="1.9"/><rect x="0" y="5.2" width="7.3" height="1.9"/><rect x="0" y="7.6" width="7.3" height="1.9"/></g></svg></div>
<div style="position:absolute;left:601.5px;top:564px;width:3px;height:16.8px;background:#4a7cc4"></div><div class="t" style="left:605px;top:564px;width:71px;height:16.5px;line-height:16.5px;text-align:center;font-size:11px;color:#cfcfcf">Keys</div>
<div class="t" style="left:676.2px;top:564px;width:70.7px;height:16.8px;line-height:16.5px;background:#1d232d;text-align:center;font-size:11px;color:#5f9fec">Latch</div>
<div class="t" style="left:748px;top:564px;width:88px;height:16.5px;line-height:16.5px;background:#0c0e12;text-align:center;font-size:11px;color:#cfcfcf">Lengths</div>
<div style="position:absolute;left:848.4px;top:564.2px;width:44.4px;height:16.4px;background:#1d232d"></div>
<svg style="position:absolute;left:855px;top:564px" width="20" height="17"><g fill="none" stroke="#5f9fec" stroke-width="1.8"><rect x="3.5" y="7" width="7" height="4" rx="2" transform="rotate(-45 7 9)"/><rect x="8" y="4" width="7" height="4" rx="2" transform="rotate(-45 11.5 6)"/></g></svg>
<div style="position:absolute;left:0;top:582px;width:902px;height:94px;background:#111"></div><div style="position:absolute;left:0;top:589px;width:902px;height:87px;background:#1c1d20"></div><div class="t" style="left:-6.50px;top:583.3px;width:33.9px;height:92.7px;border-radius:3px;background:linear-gradient(#c3c9d0 0,#c3c9d0 71.2px,#b2b8c0 71.2px);text-align:center"><span style="position:absolute;left:0;right:0;top:76.5px;font-size:11px;color:#2c2f33">D1</span></div><div class="t" style="left:28.67px;top:583.3px;width:33.9px;height:92.7px;border-radius:3px;background:linear-gradient(#c3c9d0 0,#c3c9d0 71.2px,#b2b8c0 71.2px);text-align:center"><span style="position:absolute;left:0;right:0;top:76.5px;font-size:11px;color:#2c2f33">E1</span></div><div class="t" style="left:63.84px;top:583.3px;width:33.9px;height:92.7px;border-radius:3px;background:linear-gradient(#c3c9d0 0,#c3c9d0 71.2px,#b2b8c0 71.2px);text-align:center"><span style="position:absolute;left:0;right:0;top:76.5px;font-size:11px;color:#2c2f33">F1</span></div><div class="t" style="left:99.01px;top:583.3px;width:33.9px;height:92.7px;border-radius:3px;background:linear-gradient(#c3c9d0 0,#c3c9d0 71.2px,#b2b8c0 71.2px);text-align:center"><span style="position:absolute;left:0;right:0;top:76.5px;font-size:11px;color:#2c2f33">G1</span></div><div class="t" style="left:134.18px;top:583.3px;width:33.9px;height:92.7px;border-radius:3px;background:linear-gradient(#c3c9d0 0,#c3c9d0 71.2px,#b2b8c0 71.2px);text-align:center"><span style="position:absolute;left:0;right:0;top:76.5px;font-size:11px;color:#2c2f33">A1</span></div><div class="t" style="left:169.35px;top:583.3px;width:33.9px;height:92.7px;border-radius:3px;background:linear-gradient(#c3c9d0 0,#c3c9d0 71.2px,#b2b8c0 71.2px);text-align:center"><span style="position:absolute;left:0;right:0;top:76.5px;font-size:11px;color:#2c2f33">B1</span></div><div class="t" style="left:204.52px;top:583.3px;width:33.9px;height:92.7px;border-radius:3px;background:linear-gradient(#9ea7b1 0,#9ea7b1 71.2px,#8f98a3 71.2px);text-align:center"><span style="position:absolute;left:0;right:0;top:76.5px;font-size:11px;color:#2c2f33">C2</span></div><div class="t" style="left:239.69px;top:583.3px;width:33.9px;height:92.7px;border-radius:3px;background:linear-gradient(#c3c9d0 0,#c3c9d0 71.2px,#b2b8c0 71.2px);text-align:center"><span style="position:absolute;left:0;right:0;top:76.5px;font-size:11px;color:#2c2f33">D2</span></div><div class="t" style="left:274.86px;top:583.3px;width:33.9px;height:92.7px;border-radius:3px;background:linear-gradient(#c3c9d0 0,#c3c9d0 71.2px,#b2b8c0 71.2px);text-align:center"><span style="position:absolute;left:0;right:0;top:76.5px;font-size:11px;color:#2c2f33">E2</span></div><div class="t" style="left:310.03px;top:583.3px;width:33.9px;height:92.7px;border-radius:3px;background:linear-gradient(#c3c9d0 0,#c3c9d0 71.2px,#b2b8c0 71.2px);text-align:center"><span style="position:absolute;left:0;right:0;top:76.5px;font-size:11px;color:#2c2f33">F2</span></div><div class="t" style="left:345.20px;top:583.3px;width:33.9px;height:92.7px;border-radius:3px;background:linear-gradient(#c3c9d0 0,#c3c9d0 71.2px,#b2b8c0 71.2px);text-align:center"><span style="position:absolute;left:0;right:0;top:76.5px;font-size:11px;color:#2c2f33">G2</span></div><div class="t" style="left:380.37px;top:583.3px;width:33.9px;height:92.7px;border-radius:3px;background:linear-gradient(#c3c9d0 0,#c3c9d0 71.2px,#b2b8c0 71.2px);text-align:center"><span style="position:absolute;left:0;right:0;top:76.5px;font-size:11px;color:#2c2f33">A2</span></div><div class="t" style="left:415.54px;top:583.3px;width:33.9px;height:92.7px;border-radius:3px;background:linear-gradient(#c3c9d0 0,#c3c9d0 71.2px,#b2b8c0 71.2px);text-align:center"><span style="position:absolute;left:0;right:0;top:76.5px;font-size:11px;color:#2c2f33">B2</span></div><div class="t" style="left:450.71px;top:583.3px;width:33.9px;height:92.7px;border-radius:3px;background:linear-gradient(#9ea7b1 0,#9ea7b1 71.2px,#8f98a3 71.2px);text-align:center"><span style="position:absolute;left:0;right:0;top:76.5px;font-size:11px;color:#2c2f33">C3</span></div><div class="t" style="left:485.88px;top:583.3px;width:33.9px;height:92.7px;border-radius:3px;background:linear-gradient(#c3c9d0 0,#c3c9d0 71.2px,#b2b8c0 71.2px);text-align:center"><span style="position:absolute;left:0;right:0;top:76.5px;font-size:11px;color:#2c2f33">D3</span></div><div class="t" style="left:521.05px;top:583.3px;width:33.9px;height:92.7px;border-radius:3px;background:linear-gradient(#c3c9d0 0,#c3c9d0 71.2px,#b2b8c0 71.2px);text-align:center"><span style="position:absolute;left:0;right:0;top:76.5px;font-size:11px;color:#2c2f33">E3</span></div><div class="t" style="left:556.22px;top:583.3px;width:33.9px;height:92.7px;border-radius:3px;background:linear-gradient(#c3c9d0 0,#c3c9d0 71.2px,#b2b8c0 71.2px);text-align:center"><span style="position:absolute;left:0;right:0;top:76.5px;font-size:11px;color:#2c2f33">F3</span></div><div class="t" style="left:591.39px;top:583.3px;width:33.9px;height:92.7px;border-radius:3px;background:linear-gradient(#c3c9d0 0,#c3c9d0 71.2px,#b2b8c0 71.2px);text-align:center"><span style="position:absolute;left:0;right:0;top:76.5px;font-size:11px;color:#2c2f33">G3</span></div><div class="t" style="left:626.56px;top:583.3px;width:33.9px;height:92.7px;border-radius:3px;background:linear-gradient(#c3c9d0 0,#c3c9d0 71.2px,#b2b8c0 71.2px);text-align:center"><span style="position:absolute;left:0;right:0;top:76.5px;font-size:11px;color:#2c2f33">A3</span></div><div class="t" style="left:661.73px;top:583.3px;width:33.9px;height:92.7px;border-radius:3px;background:linear-gradient(#c3c9d0 0,#c3c9d0 71.2px,#b2b8c0 71.2px);text-align:center"><span style="position:absolute;left:0;right:0;top:76.5px;font-size:11px;color:#2c2f33">B3</span></div><div class="t" style="left:696.90px;top:583.3px;width:33.9px;height:92.7px;border-radius:3px;background:linear-gradient(#9ea7b1 0,#9ea7b1 71.2px,#8f98a3 71.2px);text-align:center"><span style="position:absolute;left:0;right:0;top:76.5px;font-size:11px;color:#2c2f33">C4</span></div><div class="t" style="left:732.07px;top:583.3px;width:33.9px;height:92.7px;border-radius:3px;background:linear-gradient(#c3c9d0 0,#c3c9d0 71.2px,#b2b8c0 71.2px);text-align:center"><span style="position:absolute;left:0;right:0;top:76.5px;font-size:11px;color:#2c2f33">D4</span></div><div class="t" style="left:767.24px;top:583.3px;width:33.9px;height:92.7px;border-radius:3px;background:linear-gradient(#c3c9d0 0,#c3c9d0 71.2px,#b2b8c0 71.2px);text-align:center"><span style="position:absolute;left:0;right:0;top:76.5px;font-size:11px;color:#2c2f33">E4</span></div><div class="t" style="left:802.41px;top:583.3px;width:33.9px;height:92.7px;border-radius:3px;background:linear-gradient(#c3c9d0 0,#c3c9d0 71.2px,#b2b8c0 71.2px);text-align:center"><span style="position:absolute;left:0;right:0;top:76.5px;font-size:11px;color:#2c2f33">F4</span></div><div class="t" style="left:837.58px;top:583.3px;width:33.9px;height:92.7px;border-radius:3px;background:linear-gradient(#c3c9d0 0,#c3c9d0 71.2px,#b2b8c0 71.2px);text-align:center"><span style="position:absolute;left:0;right:0;top:76.5px;font-size:11px;color:#2c2f33">G4</span></div><div class="t" style="left:872.75px;top:583.3px;width:33.9px;height:92.7px;border-radius:3px;background:linear-gradient(#c3c9d0 0,#c3c9d0 71.2px,#b2b8c0 71.2px);text-align:center"><span style="position:absolute;left:0;right:0;top:76.5px;font-size:11px;color:#2c2f33">A4</span></div><div style="position:absolute;left:599.2px;top:254.2px;width:242.6px;height:329.6px;border:2px solid #a4a4a4;border-radius:8px;background:rgba(0,0,0,0.88);overflow:hidden">
</div><div class="t b" style="left:609.7px;top:262px;font-size:11px;color:#e8e8e8">Presets</div>
<div class="t" style="box-sizing:border-box;left:782.4px;top:260.3px;width:53.6px;height:14.6px;line-height:12.4px;border:2px solid #b8b8b8;border-radius:2px;box-shadow:inset 0 0 0 1px #2a2a2a;background:#000;text-align:center;font-size:9.8px;color:#dcdcdc">Close</div>
<div class="t" style="left:603.5px;top:278.3px;width:66.5px;height:20.3px;line-height:20.3px;background:#4a7cc4;text-align:center;font-size:11px;color:#f4f4f4">Factory</div>
<div class="t" style="left:671.3px;top:278.3px;width:65.7px;height:20.3px;line-height:20.3px;background:#1d232d;text-align:center;font-size:11px;color:#5f9fec">User</div>
<div class="t" style="left:738.6px;top:278.3px;width:66.2px;height:20.3px;line-height:20.3px;background:#1d232d;text-align:center;font-size:11px;color:#5f9fec">New</div>
<div style="position:absolute;left:806.5px;top:278.3px;width:34.5px;height:20.3px;background:#1d232d"></div>
<svg style="position:absolute;left:800px;top:275px" width="46" height="25"><path d="M19.4 10.6 Q19.4 8.6 21.4 8.6 L22.3 8.6 Q22.6 7 23.8 7 Q25 7 25.3 8.6 L26.2 8.6 Q28.2 8.6 28.2 10.6 L27.6 11.2 L27.6 18.3 Q27.6 19.9 26 19.9 L21.6 19.9 Q20 19.9 20 18.3 L20 11.2 Z" fill="#3a5f92" stroke="#5582c0" stroke-width="1.1"/><g stroke="#5582c0" stroke-width="0.8"><path d="M20.4 11.4 H27.2"/><path d="M20.4 17.8 H27.2"/><path d="M22.6 12 V17.2"/><path d="M25 12 V17.2"/></g></svg>
<svg style="position:absolute;left:608px;top:306px" width="16" height="16"><circle cx="6.5" cy="7.5" r="3" fill="none" stroke="#f0f0f0" stroke-width="1.8"/><path d="M8.6 9.6 L11.5 12.5" stroke="#f0f0f0" stroke-width="2.2" stroke-linecap="round"/></svg>
<div style="position:absolute;left:631.2px;top:305px;width:204px;height:18.6px;border:1.6px solid #4e4e4e;border-radius:5px;background:#000"></div>
<div style="position:absolute;left:601.2px;top:256.2px;width:242.6px;height:329.6px;border-radius:0 0 4px 4px;overflow:hidden"><div class="t" style="left:12.5px;top:71.35px;font-size:10px;color:#9a9a9a">Bass</div><div class="t" style="left:12.5px;top:90.44px;font-size:12px;color:#e6e6e6">Melodic Trance</div><div class="t" style="left:12.5px;top:105.05px;font-size:10px;color:#cdcdcd">Bass</div><div class="t" style="left:12.5px;top:123.46px;font-size:12px;color:#e6e6e6">Message</div><div class="t" style="left:12.5px;top:138.07px;font-size:10px;color:#cdcdcd">Seq</div><div class="t" style="left:12.5px;top:156.48px;font-size:12px;color:#e6e6e6">Metro</div><div class="t" style="left:12.5px;top:171.09px;font-size:10px;color:#cdcdcd">Seq</div><div class="t" style="left:12.5px;top:189.50px;font-size:12px;color:#e6e6e6">Move</div><div class="t" style="left:12.5px;top:204.11px;font-size:10px;color:#cdcdcd">Bass</div><div class="t" style="left:12.5px;top:222.52px;font-size:12px;color:#e6e6e6">Moving</div><div class="t" style="left:12.5px;top:237.13px;font-size:10px;color:#cdcdcd">Lead</div><div class="t" style="left:12.5px;top:255.54px;font-size:12px;color:#e6e6e6">My House 1 Finger</div><div class="t" style="left:12.5px;top:270.15px;font-size:10px;color:#cdcdcd">Chord</div><div class="t" style="left:12.5px;top:288.56px;font-size:12px;color:#e6e6e6">My Melody</div><div class="t" style="left:12.5px;top:303.17px;font-size:10px;color:#cdcdcd">Lead</div><div class="t" style="left:12.5px;top:321.58px;font-size:12px;color:#e6e6e6">Mysteric</div><div class="t" style="left:12.5px;top:336.19px;font-size:10px;color:#cdcdcd">Lead</div></div><div class="t" style="left:603.5px;top:331.4px;width:119.3px;height:19.8px;line-height:22.4px;background:rgba(82,86,94,0.85);text-align:center;font-size:10.3px;color:#f0f0f0">Name</div><div class="t" style="left:722.8px;top:331.4px;width:118.2px;height:19.8px;line-height:22.4px;background:rgba(60,64,70,0.85);text-align:center;font-size:10.3px;color:#f0f0f0">Category</div><svg style="position:absolute;left:818px;top:450px" width="16" height="14"><path d="M4 7.5 L6.5 10.5 L12 3" fill="none" stroke="#f0f0f0" stroke-width="1.6"/></svg>
</body></html>
